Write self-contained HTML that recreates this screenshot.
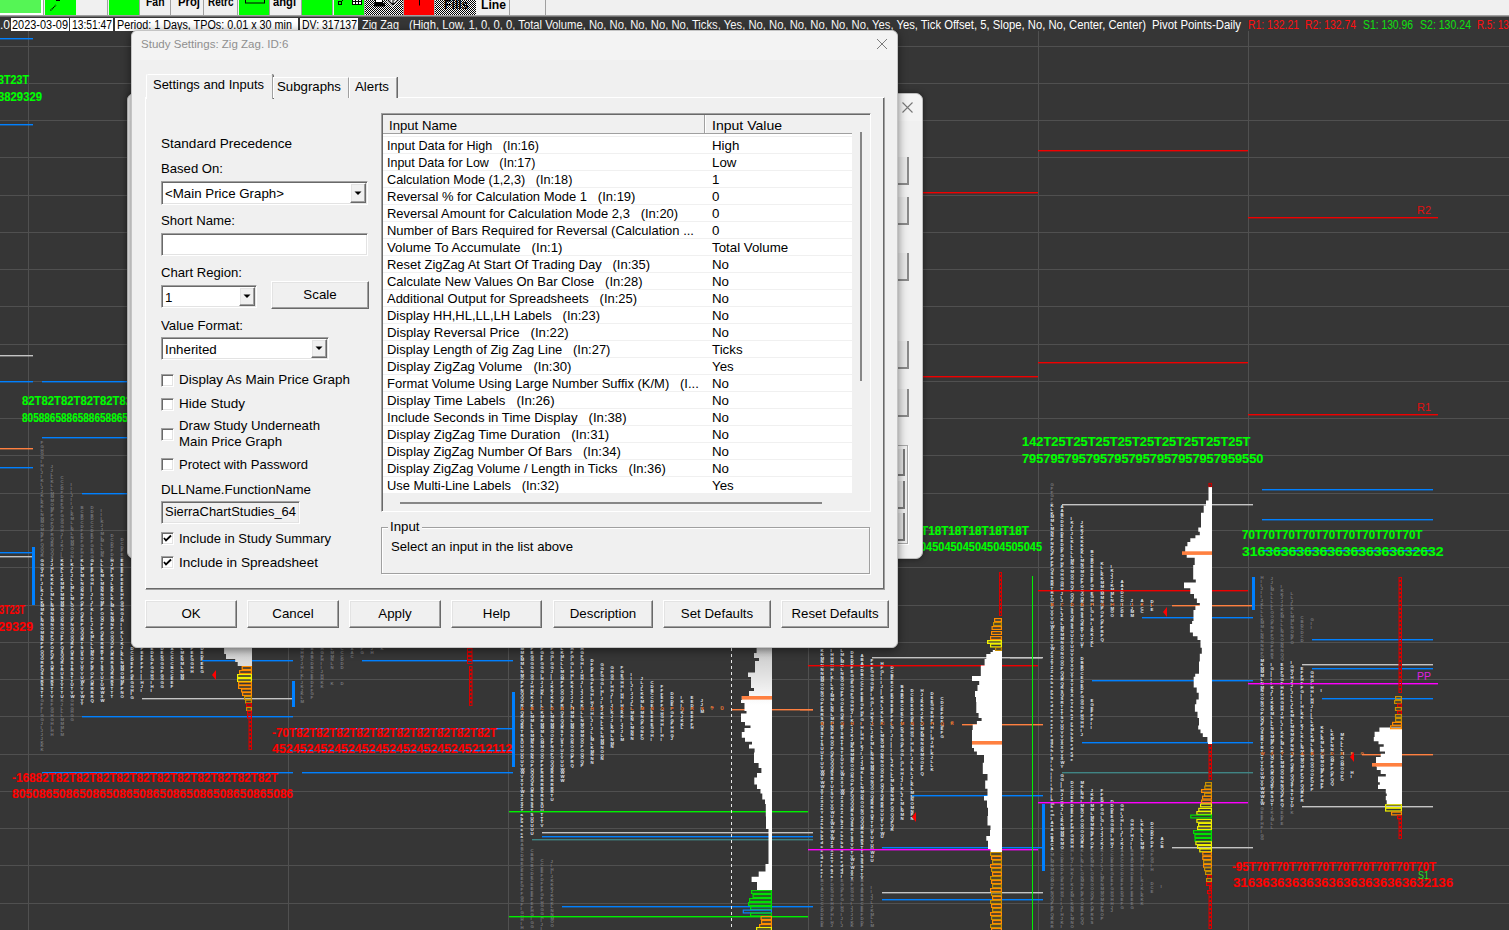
<!DOCTYPE html>
<html><head><meta charset="utf-8"><title>Study Settings</title>
<style>
html,body{margin:0;padding:0}
body{width:1509px;height:930px;overflow:hidden;position:relative;background:#363636;font-family:'Liberation Sans', sans-serif}
.t{position:absolute;white-space:pre;line-height:1;}
.tp{position:absolute;white-space:pre;font:bold 4.3px 'Liberation Sans',sans-serif;line-height:3.76px;text-align:left;transform:scaleX(1.0);transform-origin:0 0}
.c{position:absolute;white-space:pre;line-height:1;font-family:'Liberation Sans',sans-serif}
</style></head><body>
<svg width="1509" height="930" style="position:absolute;left:0;top:0">
<defs><linearGradient id="g2" x1="0" y1="0" x2="0" y2="1"><stop offset="0" stop-color="#c4c4c4"/><stop offset="1" stop-color="#ffffff"/></linearGradient></defs>
<rect x="0" y="46" width="1509" height="1" fill="#505050"/>
<rect x="0" y="83" width="1509" height="1" fill="#505050"/>
<rect x="0" y="120" width="1509" height="1" fill="#505050"/>
<rect x="0" y="157" width="1509" height="1" fill="#505050"/>
<rect x="0" y="195" width="1509" height="1" fill="#505050"/>
<rect x="0" y="232" width="1509" height="1" fill="#505050"/>
<rect x="0" y="269" width="1509" height="1" fill="#505050"/>
<rect x="0" y="306" width="1509" height="1" fill="#505050"/>
<rect x="0" y="344" width="1509" height="1" fill="#505050"/>
<rect x="0" y="381" width="1509" height="1" fill="#505050"/>
<rect x="0" y="418" width="1509" height="1" fill="#505050"/>
<rect x="0" y="455" width="1509" height="1" fill="#505050"/>
<rect x="0" y="493" width="1509" height="1" fill="#505050"/>
<rect x="0" y="530" width="1509" height="1" fill="#505050"/>
<rect x="0" y="567" width="1509" height="1" fill="#505050"/>
<rect x="0" y="605" width="1509" height="1" fill="#505050"/>
<rect x="0" y="642" width="1509" height="1" fill="#505050"/>
<rect x="0" y="679" width="1509" height="1" fill="#505050"/>
<rect x="0" y="716" width="1509" height="1" fill="#505050"/>
<rect x="0" y="754" width="1509" height="1" fill="#505050"/>
<rect x="0" y="791" width="1509" height="1" fill="#505050"/>
<rect x="0" y="828" width="1509" height="1" fill="#505050"/>
<rect x="0" y="865" width="1509" height="1" fill="#505050"/>
<rect x="0" y="903" width="1509" height="1" fill="#505050"/>
<rect x="28" y="31" width="1" height="899" fill="#505050"/>
<rect x="288" y="31" width="1" height="899" fill="#505050"/>
<rect x="508" y="31" width="1" height="899" fill="#505050"/>
<rect x="808" y="31" width="1" height="899" fill="#505050"/>
<rect x="1038" y="31" width="1" height="899" fill="#505050"/>
<rect x="1248" y="31" width="1" height="899" fill="#505050"/>
</svg>
<div class="tp" style="left:40.5px;top:441.2px;color:#76797c">F
G
H
G
G
I
H
I
J
I
K
I
J
J
K
L
K
K
L
N
M
M
O
M
N
P
P
Q
O
Q
R</div>
<div class="tp" style="left:40.5px;top:559.2px;color:#e6edf2">G
G
G
J
H
I
J
I
K
J
L
K
M
M
K
L
N
N
O
M
N
N
P
P
O
Q
O
R
P
Q
S
S
R
S
S
T
T</div>
<div class="tp" style="left:40.5px;top:699.2px;color:#76797c">G
F
F
I
G
G
J
I
J
J
J
K
K
K</div>
<div class="tp" style="left:50.5px;top:465.2px;color:#76797c">J
J
L
L
K
L
L
M
M
M
O
M
P
P
O
P
Q
P
R
Q
R
R
Q
Q
S</div>
<div class="tp" style="left:50.5px;top:559.2px;color:#e6edf2">J
J
H
I
K
K
K
L
L
M
L
L
N
M
N
N
M
N
O
N
P
O
P
O
P
Q
P
S
Q
R
S
S
R
S
T
T
V</div>
<div class="tp" style="left:50.5px;top:699.2px;color:#76797c">E
F
G
G
H
G
H
I
H
H</div>
<div class="tp" style="left:60.5px;top:476.2px;color:#76797c">C
C
C
D
F
D
E
F
G
F
G
G
G
G
H
J
I
J
K
J
I
L</div>
<div class="tp" style="left:60.5px;top:559.2px;color:#e6edf2">K
K
K
L
J
K
M
M
L
M
M
M
M
N
O
O
N
N
O
O
P
P
P
Q
S
Q
Q
R
T
R
U
S
T
V
T
T
U</div>
<div class="tp" style="left:60.5px;top:699.2px;color:#76797c">K
J
L
L
L
M
M
M
L
M</div>
<div class="tp" style="left:70.5px;top:483.2px;color:#76797c">I
I
I
J
I
I
J
L
K
M
L
L
N
L
N
M
M
O
O
N</div>
<div class="tp" style="left:70.5px;top:559.2px;color:#e6edf2">I
K
J
L
J
L
L
M
L
L
M
L
O
O
O
O
P
N
Q
O
O
Q
R
P
Q
S
R
S
T
R
S
T
T
U
T
V
W</div>
<div class="tp" style="left:70.5px;top:699.2px;color:#76797c">G
H
G
H
G
G</div>
<div class="tp" style="left:80.5px;top:506.2px;color:#76797c">B
C
B
D
C
D
F
F
D
F
G
F
H
F</div>
<div class="tp" style="left:80.5px;top:559.2px;color:#e6edf2">K
L
M
L
M
L
N
O
N
N
P
O
P
P
Q
P
R
P
Q
Q
Q
R
T
S
U
S
U
V
U
V
V
U
W
X
V
V
W
Y
Y</div>
<div class="tp" style="left:90.5px;top:506.2px;color:#76797c">D
D
B
D
C
C
D
E
D
F
G
E
H
G</div>
<div class="tp" style="left:90.5px;top:559.2px;color:#e6edf2">G
F
E
F
H
G
H
I
I
J
I
J
I
K
I
L
L
J
L
K
M
L
L
L
M
N
O
P
N
P
O
P
Q
R
R
R
R
Q</div>
<div class="tp" style="left:100.5px;top:509.2px;color:#76797c">I
I
I
K
J
J
M
L
M
L
L
M
N</div>
<div class="tp" style="left:100.5px;top:559.2px;color:#e6edf2">L
L
L
K
M
L
M
N
N
N
O
M
P
P
O
Q
O
P
P
Q
P
R
R
R
R
T
R
T
S
S
V
U
T
U
W
W
X
W</div>
<div class="tp" style="left:110.5px;top:534.2px;color:#76797c">D
C
D
D
F
D
F</div>
<div class="tp" style="left:110.5px;top:559.2px;color:#e6edf2">H
J
H
I
K
J
L
K
K
L
K
L
M
L
N
N
M
N
P
O
O
Q
O
P
Q
R
R
R
S
Q
R
R
R
S
T
T
T</div>
<div class="tp" style="left:120.5px;top:538.2px;color:#76797c">D
C
D
F
E
E</div>
<div class="tp" style="left:120.5px;top:559.2px;color:#e6edf2">E
E
E
E
F
E
E
F
E
H
F
G
G
H
G
J
H
I
I
K
I
J
K
J
L
K
L
N
M
M
O
M
M
P
P
N
O</div>
<div class="tp" style="left:130.5px;top:647.2px;color:#e6edf2">D
C
C
D
E
F
F
G
E
G
G
H
I
G</div>
<div class="tp" style="left:140.5px;top:647.2px;color:#e6edf2">F
E
F
F
F
F
I
I
I
H
J
I</div>
<div class="tp" style="left:150.5px;top:647.2px;color:#e6edf2">E
D
F
G
F
G
G
H
G
I
H
I</div>
<div class="tp" style="left:160.5px;top:647.2px;color:#e6edf2">D
E
D
G
G
G
F
G
G
G
G</div>
<div class="tp" style="left:170.5px;top:647.2px;color:#e6edf2">A
C
C
C
C
B
C
C
E
E
F</div>
<div class="tp" style="left:180.5px;top:647.2px;color:#e6edf2">L
M
K
N
M
L
N
M
M</div>
<div class="tp" style="left:190.5px;top:647.2px;color:#e6edf2">F
E
F
G
G
H
H</div>
<div class="tp" style="left:200.5px;top:647.2px;color:#e6edf2">D
E
D
F
E
E
G</div>
<div class="tp" style="left:300.5px;top:647.2px;color:#76797c">G
H
H
J
J
H
I
K
I
J
K
J
K
L
M</div>
<div class="tp" style="left:310.5px;top:647.2px;color:#76797c">B
A
B
C
D
B
C
E
E
D
F
F
G
F</div>
<div class="tp" style="left:320.5px;top:647.2px;color:#76797c">H
G
F
H
I
I
J
H
H
K
K</div>
<div class="tp" style="left:330.5px;top:647.2px;color:#76797c">L
M
M
N
L
N</div>
<div class="tp" style="left:330.5px;top:682.2px;color:#76797c">K</div>
<div class="tp" style="left:340.5px;top:647.2px;color:#76797c">C
C
C
D
D
D</div>
<div class="tp" style="left:340.5px;top:682.2px;color:#76797c">D</div>
<div class="tp" style="left:350.5px;top:647.2px;color:#76797c">A
A
C</div>
<div class="tp" style="left:360.5px;top:647.2px;color:#76797c">F
G</div>
<div class="tp" style="left:370.5px;top:647.2px;color:#76797c">J
H</div>
<div class="tp" style="left:380.5px;top:647.2px;color:#76797c">K</div>
<div class="tp" style="left:520.5px;top:647.2px;color:#e6edf2">M
M
K
M
M
L
N
M
O
P
P
N
Q
Q
O
R
R
Q
R
Q
R
R
T
R
S
U
U
U
U
U
U
V
W
W
V
X
Y
Y
W
X
Z
X
Z
Z
a
b
b
a
c
c
a</div>
<div class="tp" style="left:520.5px;top:839.2px;color:#76797c">B
A
B
C
D
B
E
C
E
E
E
F
G
F
F
G
G
F
I
G
H
H
I
H</div>
<div class="tp" style="left:530.5px;top:647.2px;color:#e6edf2">F
E
G
G
G
G
G
G
G
J
H
H
K
K
J
K
J
L
M
M
L
L
N
M
M
N
N
O
N
N
O
P
Q
Q
Q
Q
S
Q
R
S
S
S
S
T
S
U
U
U
U
U</div>
<div class="tp" style="left:530.5px;top:849.2px;color:#76797c">C
B
B
C
B
C
D
E
C
E
E
E
E
F
E
F
H
G
I
G
G</div>
<div class="tp" style="left:540.5px;top:647.2px;color:#e6edf2">F
G
F
F
G
G
G
I
H
J
J
H
K
I
I
L
K
K
M
K
M
M
M
L
O
M
M
O
O
O
P
P
P
R
R
R
R
R
S
R
S
S
U
U
T
T
T
V</div>
<div class="tp" style="left:540.5px;top:859.2px;color:#76797c">C
C
E
E
F
D
F
F
F
G
F
H
G
G
G
H
I
J
I</div>
<div class="tp" style="left:550.5px;top:647.2px;color:#e6edf2">F
G
G
I
G
G
J
I
I
J
K
K
J
K
K
L
K
L
M
N
M
M
O
O
P
P
N
O
P
O
Q
Q
R
R
R
R
R
R
R
T
U</div>
<div class="tp" style="left:550.5px;top:860.2px;color:#76797c">J
I
H
I
J
K
K
K
J
K
K
K
L
N
N
M
O
O</div>
<div class="tp" style="left:560.5px;top:647.2px;color:#e6edf2">L
K
M
L
L
L
M
O
M
P
P
O
O
Q
P
R
R
Q
S
Q
Q
R
S
T
U
S
T
U
T
V
U
U
W
W
W
W</div>
<div class="tp" style="left:570.5px;top:647.2px;color:#e6edf2">H
F
G
I
G
I
H
H
I
K
K
J
J
J
J
L
M
M
M
L
M
M
O
N
O
N
O
O
Q
P
R
Q</div>
<div class="tp" style="left:580.5px;top:647.2px;color:#e6edf2">H
G
F
G
H
I
J
H
H
J
I
J
J
J
K
K
L
L
L
N
M
O
M
M
O
O
P
O
Q
O
Q
P</div>
<div class="tp" style="left:590.5px;top:659.2px;color:#e6edf2">D
F
D
F
E
G
F
F
G
H
I
H
J
H
H
I
J
I
J
L
L
M
L
K
M
N
N
N</div>
<div class="tp" style="left:600.5px;top:663.2px;color:#e6edf2">G
G
F
G
G
G
I
H
I
J
I
K
J
K
K
L
L
K
L
N
M
M
N
O
O
N</div>
<div class="tp" style="left:610.5px;top:666.2px;color:#e6edf2">G
H
G
G
I
H
H
J
I
I
J
I
K
J
J
L
K
M
L
N
M
N</div>
<div class="tp" style="left:620.5px;top:666.2px;color:#e6edf2">F
G
E
G
H
H
I
H
H
I
H
J
K
K
I
J
J
J
L
M</div>
<div class="tp" style="left:630.5px;top:673.2px;color:#e6edf2">I
I
I
J
I
J
J
J
L
L
M
K
N
L
M
N
N
N</div>
<div class="tp" style="left:640.5px;top:677.2px;color:#e6edf2">J
L
J
L
K
K
M
L
N
M
N
O
P
O
N
P
O</div>
<div class="tp" style="left:650.5px;top:681.2px;color:#e6edf2">C
D
B
C
C
D
E
F
E
E
E
E
G
G
H
I</div>
<div class="tp" style="left:660.5px;top:685.2px;color:#e6edf2">F
F
F
E
F
F
G
H
G
H
H
I
I
H
I</div>
<div class="tp" style="left:670.5px;top:692.2px;color:#e6edf2">D
D
D
E
F
G
F
G
F
H
H
G
J</div>
<div class="tp" style="left:680.5px;top:696.2px;color:#e6edf2">I
K
I
L
K
J
K
K
L</div>
<div class="tp" style="left:690.5px;top:696.2px;color:#e6edf2">E
E
D
F
E
E
F
F
H</div>
<div class="tp" style="left:700.5px;top:699.2px;color:#e6edf2">J
J
K
M</div>
<div class="tp" style="left:710.5px;top:706.2px;color:#f08040">D</div>
<div class="tp" style="left:720.5px;top:706.2px;color:#f08040">K</div>
<div class="tp" style="left:820.5px;top:649.2px;color:#e6edf2">K
K
M
N
N
N
N
M
M
O
O
N
O
O
P
P
R
R
S
Q
Q
S
S
T
T
S
U
U
T
T
U
V
W
W
V
W
W
X
Y
Z
X
Z
a
Y
a
Z
a
b
b
b
b
d
c
c
c
d
e
f
e
e
f</div>
<div class="tp" style="left:820.5px;top:879.2px;color:#76797c">B
C
A
C
D
C
C
C
D
D
E
D
E</div>
<div class="tp" style="left:830.5px;top:649.2px;color:#e6edf2">I
H
H
H
H
H
I
K
I
L
K
J
M
M
L
N
N
L
M
N
N
N
P
N
O
O
P
Q
P
Q
Q
Q
R
S
R
T
U
T
S
V
V
V
U
W
U
X
W
X
W
X
W
Z
X
X
Z
a
Y
a
a
Z
a</div>
<div class="tp" style="left:830.5px;top:879.2px;color:#76797c">F
D
D
G
G
E
H
G
F
H
I
H
J</div>
<div class="tp" style="left:840.5px;top:649.2px;color:#e6edf2">L
M
L
M
N
L
N
N
O
O
O
P
P
O
O
P
R
Q
R
Q
R
T
S
R
T
T
S
T
T
U
V
V
U
W
X
X
Y
W
W
Z
X
X
a
Z
a
b
Z
Z
c
b
c
b
b
b
e
e
e
d
d
d
f</div>
<div class="tp" style="left:840.5px;top:879.2px;color:#76797c">E
G
G
F
F
G
I
H
G
I
J
I
J</div>
<div class="tp" style="left:850.5px;top:651.2px;color:#e6edf2">D
E
D
D
F
E
G
G
E
G
G
F
G
G
H
H
J
I
K
J
J
J
K
J
M
K
M
M
M
N
O
O
O
N
O
P
Q
P
Q
Q
Q
Q
R
S
Q
S
S
R
T
S
S
V
V
T
V
W
V
W
X
X
Y</div>
<div class="tp" style="left:850.5px;top:879.2px;color:#76797c">H
F
H
G
G
G
I
J
J
J
J
K
K</div>
<div class="tp" style="left:860.5px;top:654.2px;color:#e6edf2">A
B
A
D
D
B
C
C
C
F
E
E
E
G
F
H
F
G
I
H
I
H
H
I
K
J
I
J
J
J
M
K
L
L
L
N
M
O
N
O
O
N
O
Q
Q
Q
R
R
S
R
S
T
T
S
S
S
S
T
T
V</div>
<div class="tp" style="left:860.5px;top:879.2px;color:#76797c">B
A
A
B
B
B
C
E
E
F
D
D
F</div>
<div class="tp" style="left:870.5px;top:659.2px;color:#e6edf2">F
F
F
G
G
G
G
H
F
I
H
G
I
J
H
K
J
K
L
J
K
L
M
L
L
N
N
N
M
M
N
O
N
Q
O
O
Q
R
R
R
S
Q
S
T
T
U
T
U
V
U
U
W
U
U</div>
<div class="tp" style="left:870.5px;top:886.2px;color:#76797c">I
I
J
J
L
J
K
M
L
L
M</div>
<div class="tp" style="left:880.5px;top:662.2px;color:#e6edf2">H
F
G
I
I
I
J
I
I
K
K
I
J
K
L
K
M
L
L
M
N
O
M
O
N
N
N
O
O
O
R
P
Q
Q
S
Q
R
R
R
U
U
U
T
V
T
W
U</div>
<div class="tp" style="left:890.5px;top:666.2px;color:#e6edf2">D
C
B
E
E
C
F
E
D
E
E
E
F
F
F
I
G
I
J
I
I
I
I
I
L
J
K
L
L
L
M
L
M
N
N
M
P
O
O
Q
Q
P
Q
R</div>
<div class="tp" style="left:900.5px;top:685.2px;color:#e6edf2">B
A
B
D
B
C
D
E
C
F
F
D
G
E
G
G
F
G
G
I
G
I
H
H
J
J
I
K
L
J
L
M
L
N
M
N</div>
<div class="tp" style="left:910.5px;top:689.2px;color:#e6edf2">D
C
E
D
E
D
E
G
E
G
H
H
G
I
H
I
H
I
J
K
I
K
L
J
L
K
L
M
M
N
O
M
N
P
N</div>
<div class="tp" style="left:920.5px;top:689.2px;color:#e6edf2">H
J
J
K
K
K
J
K
L
L
M
K
M
N
N
O
N
M
O
O
P
P
Q</div>
<div class="tp" style="left:930.5px;top:692.2px;color:#e6edf2">D
E
E
G
G
E
H
F
G
H
I
I
H
J
H
I
K
J
L
L
K</div>
<div class="tp" style="left:940.5px;top:697.2px;color:#e6edf2">C
D
C
E
F
D
E
G
E
F
G</div>
<div class="tp" style="left:950.5px;top:721.2px;color:#f08040">C</div>
<div class="tp" style="left:1050.5px;top:483.2px;color:#76797c">G
F
F
G
F
F</div>
<div class="tp" style="left:1050.5px;top:504.2px;color:#e6edf2">K
L
K
M
M
L
M
N
N
P
N
P
Q
P
P
P
P
Q
S
S
R
R
T
R
T
U
U
V
V
V
V
U
W
X
X
X
Y
Y
W
Z
X
Z
Y
Z
Z
a
a
b
c
a
b
b
c
d
e
e
c
e
e
e
f
e
g
g
h
h
i
g
i
i
h
i
j
i
i
k
l
j
k
m
k
n
m
l
A
n
A
n
B
A
C
A</div>
<div class="tp" style="left:1050.5px;top:849.2px;color:#76797c">L
M
L
M
N
M
M
O
M
O
P
N
Q
Q
P
R
P
Q
R
R
R</div>
<div class="tp" style="left:1060.5px;top:505.2px;color:#e6edf2">A
A
B
C
D
D
E
D
E
E
D
D
F
G
F
H
F
G
H
G
G
H
H
J
I
J
K
L
L
J
K
L
M
N
M
M
N
O
O
N
O
O
O
P
Q
Q
R
Q
R
S
Q
S
R
T
T
T
S
V
U
U
V
V
V
X
X
V
Y
X
W
Y</div>
<div class="tp" style="left:1060.5px;top:774.2px;color:#e6edf2">G
G
I
I
H
J
J
K
K
J
L
J
K
K
M
M
M
N
M
O</div>
<div class="tp" style="left:1060.5px;top:849.2px;color:#76797c">C
C
D
E
D
D
F
G
E
H
H
H
G
I
I
J
I
H
J
K
I</div>
<div class="tp" style="left:1070.5px;top:517.2px;color:#e6edf2">I
K
J
L
J
L
K
L
L
L
L
M
N
O
M
O
O
N
Q
P
O
Q
P
R
S
S
Q
R
S
S
U
U
T
V
U
U
V
V
V
X
V
V
Y
X
Y
Z
X
X
a
Y
a
b
a
Z
c
b
b
b
b
b
e
d
e
d
e</div>
<div class="tp" style="left:1070.5px;top:781.2px;color:#e6edf2">D
C
C
D
E
E
D
E
E
F
F
F
H
F
G
H
H
H</div>
<div class="tp" style="left:1070.5px;top:849.2px;color:#76797c">H
I
H
J
I
H
K
J
I
K
J
K
M
L
K
N
N
L
M
N
O</div>
<div class="tp" style="left:1080.5px;top:521.2px;color:#e6edf2">J
K
K
J
K
K
K
K
K
L
M
N
O
M
O
P
P
O
Q
O
Q
R
R
R
S
S
Q
R
R
T
U
T
U
T</div>
<div class="tp" style="left:1080.5px;top:657.2px;color:#e6edf2">D
B
B
D
C
E
D
E
D
F
G
G
G
G
F
H
G
H
H
I
J</div>
<div class="tp" style="left:1080.5px;top:781.2px;color:#e6edf2">M
K
L
N
N
L
M
N
O
P
O
O
O
O
Q
Q
R
R</div>
<div class="tp" style="left:1080.5px;top:849.2px;color:#76797c">K
L
L
N
L
L
O
N
M
N
P
N
P
O
O
R
R
P
Q
Q</div>
<div class="tp" style="left:1090.5px;top:550.2px;color:#e6edf2">B
C
B
D
E
E
D
E
F
G
E
E
G
H
H
I
G
I
H
I
J
K
K
J
K
L</div>
<div class="tp" style="left:1090.5px;top:699.2px;color:#e6edf2">E
G
E
F
F
F
I
I</div>
<div class="tp" style="left:1090.5px;top:789.2px;color:#e6edf2">J
K
K
L
M
M
L
M
N
M
N
N
P
P
O
P</div>
<div class="tp" style="left:1090.5px;top:849.2px;color:#76797c">K
K
K
M
N
L
O
N
N
O
O
O
Q
P
P
Q
P
R
S
S</div>
<div class="tp" style="left:1100.5px;top:562.2px;color:#e6edf2">K
L
L
K
K
M
M
N
M
M
N
N
P
O
P
O
P
P
R
P
Q</div>
<div class="tp" style="left:1100.5px;top:789.2px;color:#e6edf2">F
F
E
H
F
G
G
I
G
I
J
J
J
J
K
J</div>
<div class="tp" style="left:1100.5px;top:849.2px;color:#76797c">K
J
J
J
L
J
L
M
K
N
M
M
O
M
N
P
N
O
P</div>
<div class="tp" style="left:1110.5px;top:565.2px;color:#e6edf2">I
K
J
J
J
K
M
M
L
N
M
M
O
O</div>
<div class="tp" style="left:1110.5px;top:800.2px;color:#e6edf2">D
D
D
E
E
G
G
G
H
I
H
H
J</div>
<div class="tp" style="left:1110.5px;top:849.2px;color:#76797c">C
C
D
E
D
E
G
F
E
F
G
H
G
H
H
J
J</div>
<div class="tp" style="left:1120.5px;top:580.2px;color:#e6edf2">A
A
A
D
C
D
E
C
D
E</div>
<div class="tp" style="left:1120.5px;top:804.2px;color:#e6edf2">G
H
I
J
H
I
I
J
I
J
K
J</div>
<div class="tp" style="left:1120.5px;top:849.2px;color:#76797c">A
A
C
C
D
C
D
C
E
F
E
D
G
E
F
G</div>
<div class="tp" style="left:1130.5px;top:599.2px;color:#e6edf2">J
L
J
M
M</div>
<div class="tp" style="left:1130.5px;top:819.2px;color:#e6edf2">G
H
G
I
H
J
I
I</div>
<div class="tp" style="left:1130.5px;top:849.2px;color:#76797c">B
B
A
D
B
B
D
E
E
F
F
E
E
E
E
G</div>
<div class="tp" style="left:1140.5px;top:599.2px;color:#e6edf2">A
C
C
C</div>
<div class="tp" style="left:1140.5px;top:819.2px;color:#e6edf2">L
K
L
K
L
L
M
M</div>
<div class="tp" style="left:1140.5px;top:849.2px;color:#76797c">G
H
H
I
H
I
I
I
K
J
K
L
K
K
K</div>
<div class="tp" style="left:1150.5px;top:600.2px;color:#e6edf2">D
F
E</div>
<div class="tp" style="left:1150.5px;top:822.2px;color:#e6edf2">D
C
D
D
F
D
F</div>
<div class="tp" style="left:1150.5px;top:849.2px;color:#76797c">G
F
G
G
I
H</div>
<div class="tp" style="left:1150.5px;top:882.2px;color:#76797c">D
C
E</div>
<div class="tp" style="left:1160.5px;top:837.2px;color:#e6edf2">A
C
B</div>
<div class="tp" style="left:1160.5px;top:885.2px;color:#76797c">I</div>
<div class="tp" style="left:1260.5px;top:576.2px;color:#76797c">H
I
I
J
I
I
J
K
L
L
L
K
M
M
L
N
N
N
N
N
P
O</div>
<div class="tp" style="left:1260.5px;top:659.2px;color:#e6edf2">M
K
M
M
M
L
N
M
N
O
O
N
O
O
P
Q
Q
P
Q
S
R
R
T
R
T
U
T
V
T
U
U
W
V
V
W
W
W
X
W</div>
<div class="tp" style="left:1260.5px;top:807.2px;color:#76797c">G
E
E
F
H
F
I
G
G</div>
<div class="tp" style="left:1270.5px;top:577.2px;color:#76797c">J
J
L
M
L
L
L
L
L
O
O
O
P
N
P
P
O
O
P
R
R
S</div>
<div class="tp" style="left:1270.5px;top:663.2px;color:#e6edf2">I
G
I
I
I
I
K
J
I
J
K
K
K
M
L
L
L
N
N
M
M
P
O
P
Q
O
P
R
Q
R
Q
Q
R
T
R
S
U
T</div>
<div class="tp" style="left:1270.5px;top:807.2px;color:#76797c">J
K
J
M
L
L</div>
<div class="tp" style="left:1280.5px;top:585.2px;color:#76797c">I
K
K
J
J
J
K
K
M
L
L
L
N
N
O
N
N
N
Q
Q</div>
<div class="tp" style="left:1280.5px;top:663.2px;color:#e6edf2">E
D
F
G
G
F
H
F
H
H
G
H
H
J
H
I
J
I
K
K
L
M
L
K
L
L
M
M
O
O
N
N
N
Q
Q
P
R
Q</div>
<div class="tp" style="left:1280.5px;top:807.2px;color:#76797c">C
E
D
F
E</div>
<div class="tp" style="left:1290.5px;top:592.2px;color:#76797c">L
L
J
L
K
L
M
M
L
N
O
N
P
O</div>
<div class="tp" style="left:1290.5px;top:661.2px;color:#e6edf2">I
G
H
J
H
J
J
I
J
L
L
J
L
K
M
L
L
M
N
M
O
P
N
N
O
P
P
Q
R
P
Q
Q
S
T
S
T
U
T
U</div>
<div class="tp" style="left:1290.5px;top:807.2px;color:#76797c">I
K</div>
<div class="tp" style="left:1300.5px;top:616.2px;color:#76797c">C
B
D
C
D
C
D</div>
<div class="tp" style="left:1300.5px;top:667.2px;color:#e6edf2">E
F
F
H
F
F
G
I
I
I
H
I
K
K
I
K
J
L
K
L
L
N
M
M
M
O
M
P
P
O
P
Q
Q
R
P
R</div>
<div class="tp" style="left:1310.5px;top:618.2px;color:#76797c">G
I
I</div>
<div class="tp" style="left:1310.5px;top:671.2px;color:#e6edf2">G
H
G
I
H
H
I
H
H
J
I
I
L
L
K
M
L
K
M
L
L
N
O
N
O
O
O
O
P
O
P
P</div>
<div class="tp" style="left:1320.5px;top:689.2px;color:#e6edf2">I</div>
<div class="tp" style="left:1320.5px;top:726.2px;color:#e6edf2">K
K
L
K
M
L
M
M
N
M
O
M
P
P
N
P
P</div>
<div class="tp" style="left:1330.5px;top:729.2px;color:#e6edf2">L
K
M
L
N
N
N
O
M
P
P
O
P
Q
Q</div>
<div class="tp" style="left:1340.5px;top:733.2px;color:#e6edf2">M
K
L
L
L
M
O
O
M
O
O
P
O</div>
<div class="tp" style="left:1350.5px;top:771.2px;color:#e6edf2">H
I</div>
<div class="tp" style="left:520.5px;top:706.7px;color:#ff8030;background:#363636">A</div>
<div class="tp" style="left:530.5px;top:706.7px;color:#ff8030;background:#363636">B</div>
<div class="tp" style="left:540.5px;top:706.7px;color:#ff8030;background:#363636">C</div>
<div class="tp" style="left:550.5px;top:706.7px;color:#ff8030;background:#363636">D</div>
<div class="tp" style="left:560.5px;top:706.7px;color:#ff8030;background:#363636">E</div>
<div class="tp" style="left:570.5px;top:706.7px;color:#ff8030;background:#363636">F</div>
<div class="tp" style="left:580.5px;top:706.7px;color:#ff8030;background:#363636">G</div>
<div class="tp" style="left:590.5px;top:706.7px;color:#ff8030;background:#363636">H</div>
<div class="tp" style="left:600.5px;top:706.7px;color:#ff8030;background:#363636">I</div>
<div class="tp" style="left:610.5px;top:706.7px;color:#ff8030;background:#363636">J</div>
<div class="tp" style="left:620.5px;top:706.7px;color:#ff8030;background:#363636">K</div>
<div class="tp" style="left:630.5px;top:706.7px;color:#ff8030;background:#363636">L</div>
<div class="tp" style="left:640.5px;top:706.7px;color:#ff8030;background:#363636">M</div>
<div class="tp" style="left:650.5px;top:706.7px;color:#ff8030;background:#363636">N</div>
<div class="tp" style="left:660.5px;top:706.7px;color:#ff8030;background:#363636">O</div>
<div class="tp" style="left:670.5px;top:706.7px;color:#ff8030;background:#363636">P</div>
<div class="tp" style="left:680.5px;top:706.7px;color:#ff8030;background:#363636">Q</div>
<div class="tp" style="left:690.5px;top:706.7px;color:#ff8030;background:#363636">R</div>
<div class="tp" style="left:700.5px;top:706.7px;color:#ff8030;background:#363636">S</div>
<div class="tp" style="left:710.5px;top:706.7px;color:#ff8030;background:#363636">T</div>
<div class="tp" style="left:720.5px;top:706.7px;color:#ff8030;background:#363636">U</div>
<div class="tp" style="left:820.5px;top:721.7px;color:#ff8030;background:#363636">E</div>
<div class="tp" style="left:830.5px;top:721.7px;color:#ff8030;background:#363636">F</div>
<div class="tp" style="left:840.5px;top:721.7px;color:#ff8030;background:#363636">G</div>
<div class="tp" style="left:850.5px;top:721.7px;color:#ff8030;background:#363636">H</div>
<div class="tp" style="left:860.5px;top:721.7px;color:#ff8030;background:#363636">I</div>
<div class="tp" style="left:870.5px;top:721.7px;color:#ff8030;background:#363636">J</div>
<div class="tp" style="left:880.5px;top:721.7px;color:#ff8030;background:#363636">K</div>
<div class="tp" style="left:890.5px;top:721.7px;color:#ff8030;background:#363636">L</div>
<div class="tp" style="left:900.5px;top:721.7px;color:#ff8030;background:#363636">M</div>
<div class="tp" style="left:910.5px;top:721.7px;color:#ff8030;background:#363636">N</div>
<div class="tp" style="left:920.5px;top:721.7px;color:#ff8030;background:#363636">O</div>
<div class="tp" style="left:930.5px;top:721.7px;color:#ff8030;background:#363636">P</div>
<div class="tp" style="left:940.5px;top:721.7px;color:#ff8030;background:#363636">Q</div>
<div class="tp" style="left:950.5px;top:721.7px;color:#ff8030;background:#363636">R</div>
<div class="tp" style="left:1050.5px;top:602.7px;color:#ff8030;background:#363636">B</div>
<div class="tp" style="left:1060.5px;top:602.7px;color:#ff8030;background:#363636">C</div>
<div class="tp" style="left:1070.5px;top:602.7px;color:#ff8030;background:#363636">D</div>
<div class="tp" style="left:1080.5px;top:602.7px;color:#ff8030;background:#363636">E</div>
<div class="tp" style="left:1090.5px;top:602.7px;color:#ff8030;background:#363636">F</div>
<div class="tp" style="left:1100.5px;top:602.7px;color:#ff8030;background:#363636">G</div>
<div class="tp" style="left:1110.5px;top:602.7px;color:#ff8030;background:#363636">H</div>
<div class="tp" style="left:1120.5px;top:602.7px;color:#ff8030;background:#363636">I</div>
<div class="tp" style="left:1130.5px;top:602.7px;color:#ff8030;background:#363636">J</div>
<div class="tp" style="left:1140.5px;top:602.7px;color:#ff8030;background:#363636">K</div>
<div class="tp" style="left:1150.5px;top:602.7px;color:#ff8030;background:#363636">L</div>
<div class="tp" style="left:1260.5px;top:751.7px;color:#ff8030;background:#363636">W</div>
<div class="tp" style="left:1270.5px;top:751.7px;color:#ff8030;background:#363636">X</div>
<div class="tp" style="left:1280.5px;top:751.7px;color:#ff8030;background:#363636">Y</div>
<div class="tp" style="left:1290.5px;top:751.7px;color:#ff8030;background:#363636">Z</div>
<div class="tp" style="left:1300.5px;top:751.7px;color:#ff8030;background:#363636">A</div>
<div class="tp" style="left:1310.5px;top:751.7px;color:#ff8030;background:#363636">B</div>
<div class="tp" style="left:1320.5px;top:751.7px;color:#ff8030;background:#363636">C</div>
<div class="tp" style="left:1330.5px;top:751.7px;color:#ff8030;background:#363636">D</div>
<div class="tp" style="left:1340.5px;top:751.7px;color:#ff8030;background:#363636">E</div>
<div class="tp" style="left:1350.5px;top:751.7px;color:#ff8030;background:#363636">F</div>
<div class="tp" style="left:1360.5px;top:751.7px;color:#ff8030;background:#363636">G</div>
<svg width="1509" height="930" style="position:absolute;left:0;top:0">
<rect x="0" y="38" width="33" height="1.4" fill="#0080ff"/>
<rect x="0" y="124" width="33" height="1.4" fill="#0080ff"/>
<rect x="0" y="355" width="33" height="1.4" fill="#c4c4c4"/>
<rect x="0" y="381" width="33" height="1.4" fill="#0080ff"/>
<rect x="0" y="448" width="33" height="1.4" fill="#ff8040"/>
<rect x="0" y="467" width="33" height="1.4" fill="#0080ff"/>
<rect x="0" y="552" width="33" height="1.4" fill="#0080ff"/>
<rect x="0" y="556" width="33" height="1.4" fill="#c4c4c4"/>
<rect x="42" y="381" width="85" height="1.4" fill="#0080ff"/>
<rect x="42" y="437" width="85" height="1.4" fill="#0080ff"/>
<rect x="82" y="493" width="45" height="1.4" fill="#0080ff"/>
<rect x="202" y="660" width="91" height="1.4" fill="#0080ff"/>
<rect x="362" y="660" width="151" height="1.4" fill="#0080ff"/>
<rect x="142" y="698" width="151" height="1.4" fill="#c4c4c4"/>
<rect x="82" y="716" width="211" height="1.4" fill="#0080ff"/>
<rect x="42" y="772" width="251" height="1.4" fill="#0080ff"/>
<rect x="302" y="772" width="211" height="1.4" fill="#0080ff"/>
<rect x="290" y="728" width="222" height="1.4" fill="#0080ff"/>
<rect x="290" y="750" width="222" height="1.4" fill="#0080ff"/>
<rect x="509" y="811" width="299" height="1.4" fill="#00f000"/>
<rect x="542" y="832" width="271" height="1.4" fill="#c4c4c4"/>
<rect x="542" y="836" width="271" height="1.4" fill="#0080ff"/>
<rect x="532" y="839" width="281" height="1.4" fill="#408484"/>
<rect x="562" y="906" width="251" height="1.4" fill="#0080ff"/>
<rect x="509" y="916" width="299" height="1.4" fill="#00f000"/>
<rect x="731" y="709" width="82" height="1.4" fill="#ff8040"/>
<rect x="808" y="665" width="230" height="1.4" fill="#f00000"/>
<rect x="872" y="657" width="171" height="1.4" fill="#c4c4c4"/>
<rect x="962" y="724" width="81" height="1.4" fill="#ff8040"/>
<rect x="912" y="795" width="131" height="1.4" fill="#0080ff"/>
<rect x="808" y="849" width="230" height="1.4" fill="#ff00ff"/>
<rect x="882" y="847" width="161" height="1.4" fill="#0080ff"/>
<rect x="882" y="892" width="161" height="1.4" fill="#c4c4c4"/>
<rect x="882" y="899" width="161" height="1.4" fill="#0080ff"/>
<rect x="800" y="709" width="13" height="1.4" fill="#ff8040"/>
<rect x="922" y="192" width="116" height="1.4" fill="#f00000"/>
<rect x="922" y="376" width="116" height="1.4" fill="#f00000"/>
<rect x="1038" y="150" width="210" height="1.4" fill="#f00000"/>
<rect x="1038" y="362" width="210" height="1.4" fill="#f00000"/>
<rect x="1062" y="504" width="191" height="1.4" fill="#c4c4c4"/>
<rect x="1038" y="590" width="210" height="1.4" fill="#f00000"/>
<rect x="1172" y="605" width="81" height="1.4" fill="#ff8040"/>
<rect x="1142" y="617" width="111" height="1.4" fill="#0080ff"/>
<rect x="1092" y="680" width="161" height="1.4" fill="#0080ff"/>
<rect x="1082" y="742" width="171" height="1.4" fill="#0080ff"/>
<rect x="1062" y="772" width="191" height="1.4" fill="#408484"/>
<rect x="1038" y="802" width="210" height="1.4" fill="#ff00ff"/>
<rect x="1172" y="847" width="81" height="1.4" fill="#c4c4c4"/>
<rect x="1010" y="657" width="32" height="1.4" fill="#c4c4c4"/>
<rect x="1248" y="217" width="190" height="1.4" fill="#f00000"/>
<rect x="1248" y="414" width="190" height="1.4" fill="#f00000"/>
<rect x="1262" y="489" width="171" height="1.4" fill="#0080ff"/>
<rect x="1262" y="519" width="171" height="1.4" fill="#0080ff"/>
<rect x="1262" y="550" width="171" height="1.4" fill="#0080ff"/>
<rect x="1312" y="639" width="121" height="1.4" fill="#0080ff"/>
<rect x="1302" y="664" width="131" height="1.4" fill="#c4c4c4"/>
<rect x="1312" y="668" width="121" height="1.4" fill="#0080ff"/>
<rect x="1248" y="683" width="190" height="1.4" fill="#ff00ff"/>
<rect x="1322" y="698" width="111" height="1.4" fill="#0080ff"/>
<rect x="1362" y="754" width="71" height="1.4" fill="#ff8040"/>
<rect x="1302" y="806" width="131" height="1.4" fill="#c4c4c4"/>
<rect x="32" y="547" width="3" height="58" fill="#0080ff"/>
<rect x="292" y="681" width="3" height="26" fill="#0080ff"/>
<rect x="512" y="692" width="3" height="75" fill="#0080ff"/>
<rect x="1042" y="804" width="3" height="67" fill="#0080ff"/>
<rect x="1252" y="577" width="3" height="33" fill="#0080ff"/>
<rect x="1032" y="576" width="1" height="354" fill="#00f000"/>
<line x1="731.5" y1="648" x2="731.5" y2="930" stroke="#e8e8e8" stroke-width="1" stroke-dasharray="3,3"/>
<defs><linearGradient id="gp2" gradientUnits="userSpaceOnUse" x1="0" y1="647" x2="0" y2="705"><stop offset="0" stop-color="#c6c6c6"/><stop offset="1" stop-color="#ffffff"/></linearGradient><linearGradient id="gp1" gradientUnits="userSpaceOnUse" x1="0" y1="640" x2="0" y2="666"><stop offset="0" stop-color="#c8c8c8"/><stop offset="1" stop-color="#dcdcdc"/></linearGradient></defs>
<polygon points="772.0,647.0 756.6,647.0 756.6,653.0 754.0,653.0 754.0,658.0 759.0,658.0 759.0,661.0 755.0,661.0 755.0,672.5 748.0,672.5 748.0,677.0 751.0,677.0 751.0,688.0 754.0,688.0 754.0,691.0 749.0,691.0 749.0,696.0 741.8,696.0 741.8,700.0 741.0,700.0 741.0,703.0 744.5,703.0 744.5,711.0 746.5,711.0 746.5,713.5 741.0,713.5 741.0,722.0 745.0,722.0 745.0,725.6 750.5,725.6 750.5,728.0 744.5,728.0 744.5,732.0 741.8,732.0 741.8,737.7 745.0,737.7 745.0,741.8 752.0,741.8 752.0,744.5 749.0,744.5 749.0,748.5 754.6,748.5 754.6,752.5 754.0,752.5 754.0,763.0 758.6,763.0 758.6,768.0 761.4,768.0 761.4,773.0 757.0,773.0 757.0,777.4 754.3,777.4 754.3,784.5 757.0,784.5 757.0,789.0 760.5,789.0 760.5,793.4 762.3,793.4 762.3,799.6 765.0,799.6 765.0,804.0 765.8,804.0 765.8,816.5 766.0,816.5 766.0,829.0 768.5,829.0 768.5,864.0 765.5,864.0 765.5,871.5 758.7,871.5 758.7,876.8 751.6,876.8 751.6,882.0 757.0,882.0 757.0,890.0 772.0,890.0" fill="url(#gp2)"/>
<polygon points="1002.0,650.0 992.8,650.0 992.8,652.0 990.5,652.0 990.5,654.0 986.3,654.0 986.3,659.0 984.6,659.0 984.6,665.4 980.8,665.4 980.8,676.0 972.0,676.0 972.0,681.0 979.2,681.0 979.2,685.0 977.5,685.0 977.5,691.0 975.0,691.0 975.0,697.0 976.0,697.0 976.0,702.0 976.3,702.0 976.3,713.0 978.6,713.0 978.6,718.0 981.6,718.0 981.6,721.0 976.9,721.0 976.9,724.6 972.7,724.6 972.7,730.0 972.0,730.0 972.0,748.0 974.0,748.0 974.0,751.5 976.9,751.5 976.9,755.0 984.0,755.0 984.0,762.7 982.8,762.7 982.8,774.0 987.5,774.0 987.5,780.5 985.2,780.5 985.2,788.8 987.5,788.8 987.5,795.9 984.0,795.9 984.0,800.6 987.0,800.6 987.0,807.7 988.0,807.7 988.0,816.0 987.5,816.0 987.5,825.4 990.5,825.4 990.5,830.0 990.0,830.0 990.0,836.0 986.3,836.0 986.3,840.8 988.0,840.8 988.0,849.0 990.5,849.0 990.5,852.0 1002.0,852.0" fill="#fff"/>
<polygon points="1212.0,486.7 1208.5,486.7 1208.5,500.5 1206.0,500.5 1206.0,505.6 1203.7,505.6 1203.7,512.8 1201.0,512.8 1201.0,527.4 1198.3,527.4 1198.3,531.7 1199.8,531.7 1199.8,535.3 1195.4,535.3 1195.4,538.2 1190.3,538.2 1190.3,541.9 1187.4,541.9 1187.4,546.2 1185.2,546.2 1185.2,554.2 1186.7,554.2 1186.7,557.8 1194.7,557.8 1194.7,565.0 1193.2,565.0 1193.2,579.6 1195.8,579.6 1195.8,582.5 1184.0,582.5 1184.0,588.3 1190.3,588.3 1190.3,594.1 1194.0,594.1 1194.0,598.5 1196.9,598.5 1196.9,602.9 1199.8,602.9 1199.8,605.8 1195.4,605.8 1195.4,610.0 1193.5,610.0 1193.5,621.0 1192.1,621.0 1192.1,624.0 1189.9,624.0 1189.9,632.4 1192.9,632.4 1192.9,636.2 1197.5,636.2 1197.5,640.0 1200.5,640.0 1200.5,647.7 1201.8,647.7 1201.8,653.8 1199.8,653.8 1199.8,661.4 1199.0,661.4 1199.0,673.7 1195.2,673.7 1195.2,676.7 1193.7,676.7 1193.7,687.4 1196.7,687.4 1196.7,692.7 1198.7,692.7 1198.7,699.6 1196.3,699.6 1196.3,704.2 1194.9,704.2 1194.9,711.8 1197.5,711.8 1197.5,718.0 1199.0,718.0 1199.0,725.6 1198.2,725.6 1198.2,729.4 1200.5,729.4 1200.5,733.2 1202.8,733.2 1202.8,737.0 1207.4,737.0 1207.4,742.4 1208.0,742.4 1208.0,744.0 1212.0,744.0" fill="#fff"/>
<polygon points="1402.0,727.4 1379.4,727.4 1379.4,731.7 1374.6,731.7 1374.6,737.0 1373.8,737.0 1373.8,741.2 1378.5,741.2 1378.5,744.2 1383.7,744.2 1383.7,746.8 1379.8,746.8 1379.8,751.5 1385.0,751.5 1385.0,753.7 1380.7,753.7 1380.7,757.0 1376.0,757.0 1376.0,766.6 1376.8,766.6 1376.8,770.0 1380.7,770.0 1380.7,774.0 1385.8,774.0 1385.8,776.6 1378.0,776.6 1378.0,782.2 1379.8,782.2 1379.8,784.8 1378.0,784.8 1378.0,789.0 1385.8,789.0 1385.8,793.4 1386.7,793.4 1386.7,796.0 1385.8,796.0 1385.8,800.3 1386.7,800.3 1386.7,804.2 1402.0,804.2" fill="#fff"/>
<polygon points="252.0,647.0 224.1,647.0 224.1,654.0 226.0,654.0 226.0,659.0 235.2,659.0 235.2,662.0 237.7,662.0 237.7,666.0 252.0,666.0" fill="url(#gp1)"/>
<rect x="1209" y="483.5" width="2.5" height="3" fill="none" stroke="#c00000" stroke-width="1.2"/>
<rect x="740" y="647" width="32" height="50" fill="url(#g2)" opacity="0.0"/>
<rect x="741.8" y="696" width="30.200000000000045" height="3.6" fill="#ff8040"/>
<rect x="972" y="741" width="30" height="3.6" fill="#ff8040"/>
<rect x="1182" y="551.3" width="30" height="3.6" fill="#ff8040"/>
<rect x="1372" y="763" width="30" height="3.6" fill="#ff8040"/>
<rect x="242.20" y="666.60" width="9.20" height="2.8" fill="none" stroke="#ff8c00" stroke-width="1.2"/>
<rect x="239.60" y="670.60" width="11.80" height="2.8" fill="none" stroke="#ff8c00" stroke-width="1.2"/>
<rect x="237.60" y="674.60" width="13.80" height="2.8" fill="none" stroke="#f0f000" stroke-width="1.2"/>
<rect x="237.60" y="678.60" width="13.80" height="2.8" fill="none" stroke="#f0f000" stroke-width="1.2"/>
<rect x="238.60" y="682.10" width="12.80" height="2.8" fill="none" stroke="#ff8c00" stroke-width="1.2"/>
<rect x="238.60" y="685.60" width="12.80" height="2.8" fill="none" stroke="#ff8c00" stroke-width="1.2"/>
<rect x="241.60" y="689.10" width="9.80" height="2.8" fill="none" stroke="#ff8c00" stroke-width="1.2"/>
<rect x="242.60" y="692.60" width="8.80" height="2.8" fill="none" stroke="#ff8c00" stroke-width="1.2"/>
<rect x="244.60" y="696.60" width="6.80" height="2.8" fill="none" stroke="#c89000" stroke-width="1.2"/>
<rect x="245.60" y="700.10" width="5.80" height="2.8" fill="none" stroke="#c89000" stroke-width="1.2"/>
<rect x="246.60" y="703.60" width="4.80" height="2.8" fill="none" stroke="#e80000" stroke-width="1.2"/>
<rect x="246.60" y="707.60" width="4.80" height="2.8" fill="none" stroke="#c89000" stroke-width="1.2"/>
<rect x="247.60" y="711.10" width="3.80" height="2.8" fill="none" stroke="#e80000" stroke-width="1.2"/>
<rect x="247.60" y="715.10" width="3.80" height="2.8" fill="none" stroke="#e80000" stroke-width="1.2"/>
<rect x="751.60" y="890.60" width="19.80" height="2.8" fill="none" stroke="#00e000" stroke-width="1.2"/>
<rect x="753.10" y="894.60" width="18.30" height="2.8" fill="none" stroke="#00e000" stroke-width="1.2"/>
<rect x="749.60" y="898.60" width="21.80" height="2.8" fill="none" stroke="#00e000" stroke-width="1.2"/>
<rect x="748.60" y="902.60" width="22.80" height="2.8" fill="none" stroke="#00e000" stroke-width="1.2"/>
<rect x="750.60" y="906.60" width="20.80" height="2.8" fill="none" stroke="#00e000" stroke-width="1.2"/>
<rect x="743.30" y="910.10" width="28.10" height="2.8" fill="none" stroke="#0a84ff" stroke-width="1.2"/>
<rect x="750.60" y="913.10" width="20.80" height="2.8" fill="none" stroke="#00e000" stroke-width="1.2"/>
<rect x="761.10" y="916.60" width="10.30" height="2.8" fill="none" stroke="#ff8c00" stroke-width="1.2"/>
<rect x="761.60" y="920.60" width="9.80" height="2.8" fill="none" stroke="#ff8c00" stroke-width="1.2"/>
<rect x="759.60" y="924.60" width="11.80" height="2.8" fill="none" stroke="#ff8c00" stroke-width="1.2"/>
<rect x="756.60" y="927.60" width="14.80" height="2.8" fill="none" stroke="#f0f000" stroke-width="1.2"/>
<rect x="987.60" y="640.60" width="13.80" height="2.8" fill="none" stroke="#f0f000" stroke-width="1.2"/>
<rect x="990.60" y="644.10" width="10.80" height="2.8" fill="none" stroke="#f0f000" stroke-width="1.2"/>
<rect x="995.60" y="647.60" width="5.80" height="2.8" fill="none" stroke="#c89000" stroke-width="1.2"/>
<rect x="994.60" y="618.60" width="6.80" height="2.8" fill="none" stroke="#ff8c00" stroke-width="1.2"/>
<rect x="993.60" y="622.60" width="7.80" height="2.8" fill="none" stroke="#c89000" stroke-width="1.2"/>
<rect x="992.10" y="626.60" width="9.30" height="2.8" fill="none" stroke="#ff8c00" stroke-width="1.2"/>
<rect x="991.60" y="631.60" width="9.80" height="2.8" fill="none" stroke="#ff8c00" stroke-width="1.2"/>
<rect x="990.60" y="636.60" width="10.80" height="2.8" fill="none" stroke="#ff8c00" stroke-width="1.2"/>
<rect x="987.60" y="640.60" width="13.80" height="2.8" fill="none" stroke="#f0f000" stroke-width="1.2"/>
<rect x="990.60" y="852.60" width="10.80" height="2.8" fill="none" stroke="#c89000" stroke-width="1.2"/>
<rect x="991.60" y="856.60" width="9.80" height="2.8" fill="none" stroke="#ff8c00" stroke-width="1.2"/>
<rect x="992.60" y="860.60" width="8.80" height="2.8" fill="none" stroke="#c89000" stroke-width="1.2"/>
<rect x="990.60" y="864.60" width="10.80" height="2.8" fill="none" stroke="#ff8c00" stroke-width="1.2"/>
<rect x="991.60" y="868.60" width="9.80" height="2.8" fill="none" stroke="#c89000" stroke-width="1.2"/>
<rect x="992.60" y="872.60" width="8.80" height="2.8" fill="none" stroke="#ff8c00" stroke-width="1.2"/>
<rect x="990.60" y="876.60" width="10.80" height="2.8" fill="none" stroke="#c89000" stroke-width="1.2"/>
<rect x="991.60" y="880.60" width="9.80" height="2.8" fill="none" stroke="#ff8c00" stroke-width="1.2"/>
<rect x="992.60" y="884.60" width="8.80" height="2.8" fill="none" stroke="#c89000" stroke-width="1.2"/>
<rect x="990.60" y="888.60" width="10.80" height="2.8" fill="none" stroke="#ff8c00" stroke-width="1.2"/>
<rect x="991.60" y="892.60" width="9.80" height="2.8" fill="none" stroke="#c89000" stroke-width="1.2"/>
<rect x="992.60" y="896.60" width="8.80" height="2.8" fill="none" stroke="#ff8c00" stroke-width="1.2"/>
<rect x="990.60" y="900.60" width="10.80" height="2.8" fill="none" stroke="#c89000" stroke-width="1.2"/>
<rect x="991.60" y="904.60" width="9.80" height="2.8" fill="none" stroke="#ff8c00" stroke-width="1.2"/>
<rect x="992.60" y="908.60" width="8.80" height="2.8" fill="none" stroke="#c89000" stroke-width="1.2"/>
<rect x="990.60" y="912.60" width="10.80" height="2.8" fill="none" stroke="#ff8c00" stroke-width="1.2"/>
<rect x="991.60" y="916.60" width="9.80" height="2.8" fill="none" stroke="#c89000" stroke-width="1.2"/>
<rect x="992.60" y="920.60" width="8.80" height="2.8" fill="none" stroke="#ff8c00" stroke-width="1.2"/>
<rect x="990.60" y="924.60" width="10.80" height="2.8" fill="none" stroke="#c89000" stroke-width="1.2"/>
<rect x="991.60" y="928.60" width="9.80" height="2.8" fill="none" stroke="#ff8c00" stroke-width="1.2"/>
<rect x="1205.60" y="782.60" width="5.80" height="2.8" fill="none" stroke="#c89000" stroke-width="1.2"/>
<rect x="1204.80" y="786.10" width="6.60" height="2.8" fill="none" stroke="#c89000" stroke-width="1.2"/>
<rect x="1201.60" y="789.60" width="9.80" height="2.8" fill="none" stroke="#ff8c00" stroke-width="1.2"/>
<rect x="1204.60" y="793.30" width="6.80" height="2.8" fill="none" stroke="#c89000" stroke-width="1.2"/>
<rect x="1202.60" y="796.20" width="8.80" height="2.8" fill="none" stroke="#ff8c00" stroke-width="1.2"/>
<rect x="1201.60" y="800.10" width="9.80" height="2.8" fill="none" stroke="#ff8c00" stroke-width="1.2"/>
<rect x="1200.60" y="804.00" width="10.80" height="2.8" fill="none" stroke="#f0f000" stroke-width="1.2"/>
<rect x="1198.80" y="808.40" width="12.60" height="2.8" fill="none" stroke="#f0f000" stroke-width="1.2"/>
<rect x="1196.90" y="811.60" width="14.50" height="2.8" fill="none" stroke="#f0f000" stroke-width="1.2"/>
<rect x="1190.80" y="815.10" width="20.60" height="2.8" fill="none" stroke="#00e000" stroke-width="1.2"/>
<rect x="1196.90" y="819.50" width="14.50" height="2.8" fill="none" stroke="#f0f000" stroke-width="1.2"/>
<rect x="1198.60" y="823.40" width="12.80" height="2.8" fill="none" stroke="#f0f000" stroke-width="1.2"/>
<rect x="1197.60" y="826.70" width="13.80" height="2.8" fill="none" stroke="#f0f000" stroke-width="1.2"/>
<rect x="1193.60" y="830.60" width="17.80" height="2.8" fill="none" stroke="#00e000" stroke-width="1.2"/>
<rect x="1194.90" y="834.60" width="16.50" height="2.8" fill="none" stroke="#00e000" stroke-width="1.2"/>
<rect x="1195.10" y="838.40" width="16.30" height="2.8" fill="none" stroke="#00e000" stroke-width="1.2"/>
<rect x="1195.90" y="841.80" width="15.50" height="2.8" fill="none" stroke="#f0f000" stroke-width="1.2"/>
<rect x="1197.60" y="845.60" width="13.80" height="2.8" fill="none" stroke="#f0f000" stroke-width="1.2"/>
<rect x="1199.80" y="849.00" width="11.60" height="2.8" fill="none" stroke="#f0f000" stroke-width="1.2"/>
<rect x="1202.80" y="852.40" width="8.60" height="2.8" fill="none" stroke="#ff8c00" stroke-width="1.2"/>
<rect x="1202.80" y="856.60" width="8.60" height="2.8" fill="none" stroke="#ff8c00" stroke-width="1.2"/>
<rect x="1203.60" y="860.60" width="7.80" height="2.8" fill="none" stroke="#c89000" stroke-width="1.2"/>
<rect x="1203.60" y="864.40" width="7.80" height="2.8" fill="none" stroke="#ff8c00" stroke-width="1.2"/>
<rect x="1204.60" y="867.80" width="6.80" height="2.8" fill="none" stroke="#c89000" stroke-width="1.2"/>
<rect x="1205.60" y="871.60" width="5.80" height="2.8" fill="none" stroke="#c89000" stroke-width="1.2"/>
<rect x="1207.60" y="875.60" width="3.80" height="2.8" fill="none" stroke="#e80000" stroke-width="1.2"/>
<rect x="1206.60" y="878.60" width="4.80" height="2.8" fill="none" stroke="#c89000" stroke-width="1.2"/>
<rect x="1206.60" y="882.60" width="4.80" height="2.8" fill="none" stroke="#e80000" stroke-width="1.2"/>
<rect x="1209.60" y="886.30" width="1.80" height="2.8" fill="none" stroke="#e80000" stroke-width="1.2"/>
<rect x="1207.60" y="890.60" width="3.80" height="2.8" fill="none" stroke="#e80000" stroke-width="1.2"/>
<rect x="1395.60" y="696.60" width="5.80" height="2.8" fill="none" stroke="#c89000" stroke-width="1.2"/>
<rect x="1394.60" y="700.60" width="6.80" height="2.8" fill="none" stroke="#c89000" stroke-width="1.2"/>
<rect x="1397.60" y="704.10" width="3.80" height="2.8" fill="none" stroke="#e80000" stroke-width="1.2"/>
<rect x="1395.50" y="707.60" width="5.90" height="2.8" fill="none" stroke="#c89000" stroke-width="1.2"/>
<rect x="1397.60" y="711.20" width="3.80" height="2.8" fill="none" stroke="#e80000" stroke-width="1.2"/>
<rect x="1395.50" y="714.60" width="5.90" height="2.8" fill="none" stroke="#c89000" stroke-width="1.2"/>
<rect x="1395.60" y="718.60" width="5.80" height="2.8" fill="none" stroke="#c89000" stroke-width="1.2"/>
<rect x="1392.60" y="722.40" width="8.80" height="2.8" fill="none" stroke="#ff8c00" stroke-width="1.2"/>
<rect x="1390.60" y="725.90" width="10.80" height="2.8" fill="none" stroke="#ff8c00" stroke-width="1.2"/>
<rect x="1385.60" y="804.80" width="15.80" height="2.8" fill="none" stroke="#f0f000" stroke-width="1.2"/>
<rect x="1385.60" y="808.20" width="15.80" height="2.8" fill="none" stroke="#f0f000" stroke-width="1.2"/>
<rect x="1391.60" y="812.10" width="9.80" height="2.8" fill="none" stroke="#ff8c00" stroke-width="1.2"/>
<rect x="1397.60" y="815.90" width="3.80" height="2.8" fill="none" stroke="#e80000" stroke-width="1.2"/>
<rect x="249.0" y="718.5" width="2.5" height="3" fill="none" stroke="#d80000" stroke-width="1"/>
<rect x="249.0" y="722.5" width="2.5" height="3" fill="none" stroke="#d80000" stroke-width="1"/>
<rect x="249.0" y="726.5" width="2.5" height="3" fill="none" stroke="#d80000" stroke-width="1"/>
<rect x="249.0" y="730.5" width="2.5" height="3" fill="none" stroke="#d80000" stroke-width="1"/>
<rect x="249.0" y="734.5" width="2.5" height="3" fill="none" stroke="#d80000" stroke-width="1"/>
<rect x="249.0" y="738.5" width="2.5" height="3" fill="none" stroke="#d80000" stroke-width="1"/>
<rect x="249.0" y="742.5" width="2.5" height="3" fill="none" stroke="#d80000" stroke-width="1"/>
<rect x="249.0" y="746.5" width="2.5" height="3" fill="none" stroke="#d80000" stroke-width="1"/>
<rect x="469.5" y="666.5" width="2.5" height="3" fill="none" stroke="#d80000" stroke-width="1"/>
<rect x="469.5" y="670.5" width="2.5" height="3" fill="none" stroke="#d80000" stroke-width="1"/>
<rect x="469.5" y="674.5" width="2.5" height="3" fill="none" stroke="#d80000" stroke-width="1"/>
<rect x="469.5" y="678.5" width="2.5" height="3" fill="none" stroke="#d80000" stroke-width="1"/>
<rect x="469.5" y="682.5" width="2.5" height="3" fill="none" stroke="#d80000" stroke-width="1"/>
<rect x="469.5" y="686.5" width="2.5" height="3" fill="none" stroke="#d80000" stroke-width="1"/>
<rect x="469.5" y="690.5" width="2.5" height="3" fill="none" stroke="#d80000" stroke-width="1"/>
<rect x="469.5" y="694.5" width="2.5" height="3" fill="none" stroke="#d80000" stroke-width="1"/>
<rect x="469.5" y="698.5" width="2.5" height="3" fill="none" stroke="#d80000" stroke-width="1"/>
<rect x="469.5" y="702.5" width="2.5" height="3" fill="none" stroke="#d80000" stroke-width="1"/>
<rect x="467.5" y="648.5" width="4.5" height="3" fill="none" stroke="#d80000" stroke-width="1"/>
<rect x="467.5" y="652.5" width="4.5" height="3" fill="none" stroke="#d80000" stroke-width="1"/>
<rect x="467.5" y="656.5" width="4.5" height="3" fill="none" stroke="#d80000" stroke-width="1"/>
<rect x="467.5" y="660.5" width="4.5" height="3" fill="none" stroke="#d80000" stroke-width="1"/>
<rect x="999.5" y="572.5" width="2.0" height="3" fill="none" stroke="#d80000" stroke-width="1"/>
<rect x="999.5" y="576.5" width="2.0" height="3" fill="none" stroke="#d80000" stroke-width="1"/>
<rect x="999.5" y="580.5" width="2.0" height="3" fill="none" stroke="#d80000" stroke-width="1"/>
<rect x="999.5" y="584.5" width="2.0" height="3" fill="none" stroke="#d80000" stroke-width="1"/>
<rect x="999.5" y="588.5" width="2.0" height="3" fill="none" stroke="#d80000" stroke-width="1"/>
<rect x="999.5" y="592.5" width="2.0" height="3" fill="none" stroke="#d80000" stroke-width="1"/>
<rect x="999.5" y="596.5" width="2.0" height="3" fill="none" stroke="#d80000" stroke-width="1"/>
<rect x="999.5" y="600.5" width="2.0" height="3" fill="none" stroke="#d80000" stroke-width="1"/>
<rect x="999.5" y="604.5" width="2.0" height="3" fill="none" stroke="#d80000" stroke-width="1"/>
<rect x="999.5" y="608.5" width="2.0" height="3" fill="none" stroke="#d80000" stroke-width="1"/>
<rect x="999.5" y="612.5" width="2.0" height="3" fill="none" stroke="#d80000" stroke-width="1"/>
<rect x="1209.0" y="744.5" width="2.5" height="3" fill="none" stroke="#d80000" stroke-width="1"/>
<rect x="1209.0" y="748.5" width="2.5" height="3" fill="none" stroke="#d80000" stroke-width="1"/>
<rect x="1209.0" y="752.5" width="2.5" height="3" fill="none" stroke="#d80000" stroke-width="1"/>
<rect x="1209.0" y="756.5" width="2.5" height="3" fill="none" stroke="#d80000" stroke-width="1"/>
<rect x="1209.0" y="760.5" width="2.5" height="3" fill="none" stroke="#d80000" stroke-width="1"/>
<rect x="1209.0" y="764.5" width="2.5" height="3" fill="none" stroke="#d80000" stroke-width="1"/>
<rect x="1209.0" y="768.5" width="2.5" height="3" fill="none" stroke="#d80000" stroke-width="1"/>
<rect x="1209.0" y="772.5" width="2.5" height="3" fill="none" stroke="#d80000" stroke-width="1"/>
<rect x="1209.0" y="776.5" width="2.5" height="3" fill="none" stroke="#d80000" stroke-width="1"/>
<rect x="1209.0" y="893.5" width="2.5" height="3" fill="none" stroke="#d80000" stroke-width="1"/>
<rect x="1209.0" y="897.5" width="2.5" height="3" fill="none" stroke="#d80000" stroke-width="1"/>
<rect x="1209.0" y="901.5" width="2.5" height="3" fill="none" stroke="#d80000" stroke-width="1"/>
<rect x="1209.0" y="905.5" width="2.5" height="3" fill="none" stroke="#d80000" stroke-width="1"/>
<rect x="1209.0" y="909.5" width="2.5" height="3" fill="none" stroke="#d80000" stroke-width="1"/>
<rect x="1209.0" y="913.5" width="2.5" height="3" fill="none" stroke="#d80000" stroke-width="1"/>
<rect x="1209.0" y="917.5" width="2.5" height="3" fill="none" stroke="#d80000" stroke-width="1"/>
<rect x="1209.0" y="921.5" width="2.5" height="3" fill="none" stroke="#d80000" stroke-width="1"/>
<rect x="1209.0" y="925.5" width="2.5" height="3" fill="none" stroke="#d80000" stroke-width="1"/>
<rect x="1399.0" y="577.5" width="2.5" height="3" fill="none" stroke="#d80000" stroke-width="1"/>
<rect x="1399.0" y="581.5" width="2.5" height="3" fill="none" stroke="#d80000" stroke-width="1"/>
<rect x="1399.0" y="585.5" width="2.5" height="3" fill="none" stroke="#d80000" stroke-width="1"/>
<rect x="1399.0" y="589.5" width="2.5" height="3" fill="none" stroke="#d80000" stroke-width="1"/>
<rect x="1399.0" y="593.5" width="2.5" height="3" fill="none" stroke="#d80000" stroke-width="1"/>
<rect x="1399.0" y="597.5" width="2.5" height="3" fill="none" stroke="#d80000" stroke-width="1"/>
<rect x="1399.0" y="601.5" width="2.5" height="3" fill="none" stroke="#d80000" stroke-width="1"/>
<rect x="1399.0" y="605.5" width="2.5" height="3" fill="none" stroke="#d80000" stroke-width="1"/>
<rect x="1399.0" y="609.5" width="2.5" height="3" fill="none" stroke="#d80000" stroke-width="1"/>
<rect x="1399.0" y="613.5" width="2.5" height="3" fill="none" stroke="#d80000" stroke-width="1"/>
<rect x="1399.0" y="617.5" width="2.5" height="3" fill="none" stroke="#d80000" stroke-width="1"/>
<rect x="1399.0" y="621.5" width="2.5" height="3" fill="none" stroke="#d80000" stroke-width="1"/>
<rect x="1399.0" y="625.5" width="2.5" height="3" fill="none" stroke="#d80000" stroke-width="1"/>
<rect x="1399.0" y="629.5" width="2.5" height="3" fill="none" stroke="#d80000" stroke-width="1"/>
<rect x="1399.0" y="633.5" width="2.5" height="3" fill="none" stroke="#d80000" stroke-width="1"/>
<rect x="1399.0" y="637.5" width="2.5" height="3" fill="none" stroke="#d80000" stroke-width="1"/>
<rect x="1399.0" y="641.5" width="2.5" height="3" fill="none" stroke="#d80000" stroke-width="1"/>
<rect x="1399.0" y="645.5" width="2.5" height="3" fill="none" stroke="#d80000" stroke-width="1"/>
<rect x="1399.0" y="649.5" width="2.5" height="3" fill="none" stroke="#d80000" stroke-width="1"/>
<rect x="1399.0" y="653.5" width="2.5" height="3" fill="none" stroke="#d80000" stroke-width="1"/>
<rect x="1399.0" y="657.5" width="2.5" height="3" fill="none" stroke="#d80000" stroke-width="1"/>
<rect x="1399.0" y="661.5" width="2.5" height="3" fill="none" stroke="#d80000" stroke-width="1"/>
<rect x="1399.0" y="665.5" width="2.5" height="3" fill="none" stroke="#d80000" stroke-width="1"/>
<rect x="1399.0" y="669.5" width="2.5" height="3" fill="none" stroke="#d80000" stroke-width="1"/>
<rect x="1399.0" y="673.5" width="2.5" height="3" fill="none" stroke="#d80000" stroke-width="1"/>
<rect x="1399.0" y="677.5" width="2.5" height="3" fill="none" stroke="#d80000" stroke-width="1"/>
<rect x="1399.0" y="681.5" width="2.5" height="3" fill="none" stroke="#d80000" stroke-width="1"/>
<rect x="1399.0" y="685.5" width="2.5" height="3" fill="none" stroke="#d80000" stroke-width="1"/>
<rect x="1399.0" y="689.5" width="2.5" height="3" fill="none" stroke="#d80000" stroke-width="1"/>
<rect x="1399.0" y="819.5" width="2.5" height="3" fill="none" stroke="#d80000" stroke-width="1"/>
<rect x="1399.0" y="823.5" width="2.5" height="3" fill="none" stroke="#d80000" stroke-width="1"/>
<rect x="1399.0" y="827.5" width="2.5" height="3" fill="none" stroke="#d80000" stroke-width="1"/>
<rect x="1399.0" y="831.5" width="2.5" height="3" fill="none" stroke="#d80000" stroke-width="1"/>
<rect x="1399.0" y="835.5" width="2.5" height="3" fill="none" stroke="#d80000" stroke-width="1"/>
<polygon points="212,675 216,670 216,680" fill="#ff0000"/>
<polygon points="912,817 916,812 916,822" fill="#ff0000"/>
<polygon points="1163,612 1167,607 1167,617" fill="#ff0000"/>
<polygon points="1350,757 1354,752 1354,762" fill="#ff0000"/>
</svg>
<span class="c" style="left:-2px;top:73.2px;font-size:13.6px;font-weight:bold;color:#00ff00;-webkit-text-stroke:0.12px #00ff00;transform:scaleX(0.7889);transform-origin:0 0">3T23T</span>
<span class="c" style="left:-2px;top:90.0px;font-size:13.6px;font-weight:bold;color:#00ff00;-webkit-text-stroke:0.12px #00ff00;transform:scaleX(0.8314);transform-origin:0 0">3829329</span>
<span class="c" style="left:21.5px;top:394.2px;font-size:13.6px;font-weight:bold;color:#00ff00;-webkit-text-stroke:0.12px #00ff00;transform:scaleX(0.8325);transform-origin:0 0">82T82T82T82T82T82T</span>
<span class="c" style="left:21.5px;top:410.9px;font-size:13.6px;font-weight:bold;color:#00ff00;-webkit-text-stroke:0.12px #00ff00;transform:scaleX(0.7369);transform-origin:0 0">805886588658865886588</span>
<span class="c" style="left:-6px;top:603.4px;font-size:13.6px;font-weight:bold;color:#ff0000;-webkit-text-stroke:0.12px #ff0000;transform:scaleX(0.6616);transform-origin:0 0">23T23T</span>
<span class="c" style="left:-2px;top:619.6px;font-size:13.6px;font-weight:bold;color:#ff0000;-webkit-text-stroke:0.12px #ff0000;transform:scaleX(0.9256);transform-origin:0 0">29329</span>
<span class="c" style="left:12px;top:771.4px;font-size:13.6px;font-weight:bold;color:#ff0000;-webkit-text-stroke:0.12px #ff0000;transform:scaleX(0.8628);transform-origin:0 0">-16882T82T82T82T82T82T82T82T82T82T82T82T</span>
<span class="c" style="left:12px;top:787.0px;font-size:13.6px;font-weight:bold;color:#ff0000;-webkit-text-stroke:0.12px #ff0000;transform:scaleX(0.8850);transform-origin:0 0">805086508650865086508650865086508650865086</span>
<span class="c" style="left:272px;top:725.9px;font-size:13.6px;font-weight:bold;color:#ff0000;-webkit-text-stroke:0.12px #ff0000;transform:scaleX(0.8581);transform-origin:0 0">-70T82T82T82T82T82T82T82T82T82T82T</span>
<span class="c" style="left:272px;top:742.4px;font-size:13.6px;font-weight:bold;color:#ff0000;-webkit-text-stroke:0.12px #ff0000;transform:scaleX(0.9096);transform-origin:0 0">45245245245245245245245245245212112</span>
<span class="c" style="left:921px;top:524.1px;font-size:13.6px;font-weight:bold;color:#00ff00;-webkit-text-stroke:0.12px #00ff00;transform:scaleX(0.8610);transform-origin:0 0">T18T18T18T18T18T</span>
<span class="c" style="left:920px;top:540.4px;font-size:13.6px;font-weight:bold;color:#00ff00;-webkit-text-stroke:0.12px #00ff00;transform:scaleX(0.8068);transform-origin:0 0">04504504504504505045</span>
<span class="c" style="left:1021.6px;top:435.4px;font-size:13.6px;font-weight:bold;color:#00ff00;-webkit-text-stroke:0.12px #00ff00;transform:scaleX(0.9445);transform-origin:0 0">142T25T25T25T25T25T25T25T25T25T</span>
<span class="c" style="left:1021.6px;top:452.3px;font-size:13.6px;font-weight:bold;color:#00ff00;-webkit-text-stroke:0.12px #00ff00;transform:scaleX(0.9391);transform-origin:0 0">7957957957957957957957957957959550</span>
<span class="c" style="left:1241.5px;top:528.4px;font-size:13.6px;font-weight:bold;color:#00ff00;-webkit-text-stroke:0.12px #00ff00;transform:scaleX(0.8561);transform-origin:0 0">70T70T70T70T70T70T70T70T70T</span>
<span class="c" style="left:1241.5px;top:545.2px;font-size:13.6px;font-weight:bold;color:#00ff00;-webkit-text-stroke:0.12px #00ff00;transform:scaleX(1.0250);transform-origin:0 0">31636363636363636363632632</span>
<span class="c" style="left:1232px;top:859.6px;font-size:13.6px;font-weight:bold;color:#ff0000;-webkit-text-stroke:0.12px #ff0000;transform:scaleX(0.8543);transform-origin:0 0">-95T70T70T70T70T70T70T70T70T70T</span>
<span class="c" style="left:1233px;top:876.4px;font-size:13.6px;font-weight:bold;color:#ff0000;-webkit-text-stroke:0.12px #ff0000;transform:scaleX(0.9700);transform-origin:0 0">316363636363636363636363632136</span>
<span class="c" style="left:1417px;top:204.7px;font-size:11px;color:#e01010;transform:scaleX(0.9956);transform-origin:0 0">R2</span>
<span class="c" style="left:1417px;top:401.6px;font-size:11px;color:#e01010;transform:scaleX(0.9956);transform-origin:0 0">R1</span>
<span class="c" style="left:1417px;top:670.6px;font-size:11px;color:#e020e0;transform:scaleX(0.9532);transform-origin:0 0">PP</span>
<span class="c" style="left:1418px;top:869.6px;font-size:11px;color:#20e020;transform:scaleX(0.8167);transform-origin:0 0">S1</span>
<div id="tb"><div style="position:absolute;left:0px;top:0px;width:1509px;height:15px;background:#f0f0f0"></div>
<div style="position:absolute;left:0px;top:15px;width:1509px;height:1px;background:#a0a0a0"></div>
<div style="position:absolute;left:0px;top:16px;width:1509px;height:1px;background:#6e6e6e"></div>
<div style="position:absolute;left:0px;top:0px;width:43px;height:15px;background:#55f555"></div>
<div style="position:absolute;left:43px;top:0px;width:1px;height:15px;background:#a0a0a0"></div>
<div style="position:absolute;left:45px;top:0px;width:31px;height:15px;background:#00ff00"></div>
<div style="position:absolute;left:76px;top:0px;width:1px;height:15px;background:#a0a0a0"></div>
<div style="position:absolute;left:76px;top:0px;width:31px;height:15px;background:#f0f0f0"></div>
<div style="position:absolute;left:107px;top:0px;width:1px;height:15px;background:#a0a0a0"></div>
<div style="position:absolute;left:109px;top:0px;width:30px;height:15px;background:#00ff00"></div>
<div style="position:absolute;left:139px;top:0px;width:1px;height:15px;background:#a0a0a0"></div>
<div style="position:absolute;left:140px;top:0px;width:30px;height:15px;background:#f0f0f0"></div>
<div style="position:absolute;left:170px;top:0px;width:1px;height:15px;background:#a0a0a0"></div>
<div style="position:absolute;left:171px;top:0px;width:32px;height:15px;background:#f0f0f0"></div>
<div style="position:absolute;left:203px;top:0px;width:1px;height:15px;background:#a0a0a0"></div>
<div style="position:absolute;left:204px;top:0px;width:33px;height:15px;background:#f0f0f0"></div>
<div style="position:absolute;left:237px;top:0px;width:1px;height:15px;background:#a0a0a0"></div>
<div style="position:absolute;left:239px;top:0px;width:30px;height:15px;background:#00ff00"></div>
<div style="position:absolute;left:269px;top:0px;width:1px;height:15px;background:#a0a0a0"></div>
<div style="position:absolute;left:270px;top:0px;width:31px;height:15px;background:#f0f0f0"></div>
<div style="position:absolute;left:301px;top:0px;width:1px;height:15px;background:#a0a0a0"></div>
<div style="position:absolute;left:302px;top:0px;width:30px;height:15px;background:#00ff00"></div>
<div style="position:absolute;left:332px;top:0px;width:1px;height:15px;background:#a0a0a0"></div>
<div style="position:absolute;left:334px;top:0px;width:30px;height:15px;background:#00ff00"></div>
<div style="position:absolute;left:364px;top:0px;width:1px;height:15px;background:#a0a0a0"></div>
<div style="position:absolute;left:365px;top:0px;width:38px;height:15px;background-color:#fff;background-image:repeating-conic-gradient(#000 0 25%,#fff 0 50%);background-size:2px 2px;opacity:1"></div>
<div style="position:absolute;left:403px;top:0px;width:1px;height:15px;background:#a0a0a0"></div>
<div style="position:absolute;left:404px;top:0px;width:30px;height:15px;background:#ff0000"></div>
<div style="position:absolute;left:434px;top:0px;width:1px;height:15px;background:#a0a0a0"></div>
<div style="position:absolute;left:435px;top:0px;width:41px;height:15px;background-color:#fff;background-image:repeating-conic-gradient(#000 0 25%,#fff 0 50%);background-size:2px 2px;opacity:1"></div>
<div style="position:absolute;left:476px;top:0px;width:1px;height:15px;background:#a0a0a0"></div>
<div style="position:absolute;left:476px;top:0px;width:33px;height:15px;background:#f0f0f0"></div>
<div style="position:absolute;left:509px;top:0px;width:1px;height:15px;background:#a0a0a0"></div>
<div style="position:absolute;left:510px;top:0px;width:35px;height:15px;background:#f0f0f0"></div>
<div style="position:absolute;left:545px;top:0px;width:1px;height:15px;background:#a0a0a0"></div>
<div style="position:absolute;left:0px;top:13px;width:43px;height:2px;background:#fff"></div>
<div style="position:absolute;left:41px;top:0px;width:2px;height:15px;background:#fff"></div>
<svg style="position:absolute;left:0;top:0" width="560" height="16"><line x1="50.5" y1="10.5" x2="56" y2="5" stroke="#000" stroke-width="1.2" stroke-dasharray="1.2,0.6"/><rect x="56" y="0" width="4" height="1" fill="#000"/><rect x="245.5" y="-4" width="19" height="7" fill="none" stroke="#000"/><rect x="338.5" y="1.5" width="3" height="3" fill="none" stroke="#000"/><line x1="341.5" y1="1.5" x2="343" y2="0" stroke="#000"/><rect x="352.5" y="-3.5" width="9" height="8" fill="#fff" stroke="#000"/><line x1="352" y1="1.5" x2="362" y2="1.5" stroke="#000"/><line x1="355.5" y1="0" x2="355.5" y2="4" stroke="#000"/><line x1="358.5" y1="0" x2="358.5" y2="4" stroke="#000"/><rect x="375.5" y="-1.5" width="7" height="4" fill="#fff" stroke="#000"/><rect x="374" y="3" width="11" height="3.5" rx="1" fill="#000"/><path d="M388 0 L393 5 L398 0 M393 -1 L393 5.5" stroke="#fff" stroke-width="3" fill="none"/><path d="M388 0 L393 5 L398 0 M393 -1 L393 5.5" stroke="#000" stroke-width="1.1" fill="none"/><rect x="419" y="0" width="1" height="5.5" fill="#000"/></svg></div>
<div style="position:absolute;left:11px;top:18px;width:58px;height:13px;background:#fff"></div>
<div style="position:absolute;left:70px;top:18px;width:43px;height:13px;background:#fff"></div>
<div style="position:absolute;left:115px;top:18px;width:183px;height:13px;background:#fff"></div>
<div style="position:absolute;left:300px;top:18px;width:58px;height:13px;background:#fff"></div>
<span class="t" style="left:146px;top:-3.62px;font-size:12.5px;color:#000;font-weight:bold;font-family:'Liberation Sans';transform:scaleX(0.8320);transform-origin:0 0;">Fan</span>
<span class="t" style="left:177.5px;top:-3.62px;font-size:12.5px;color:#000;font-weight:bold;font-family:'Liberation Sans';transform:scaleX(0.9049);transform-origin:0 0;">Proj</span>
<span class="t" style="left:208px;top:-3.62px;font-size:12.5px;color:#000;font-weight:bold;font-family:'Liberation Sans';transform:scaleX(0.7977);transform-origin:0 0;">Retrc</span>
<span class="t" style="left:273px;top:-3.62px;font-size:12.5px;color:#000;font-weight:bold;font-family:'Liberation Sans';transform:scaleX(0.8948);transform-origin:0 0;">angl</span>
<span class="t" style="left:443.5px;top:-0.62px;font-size:12.5px;color:#000;font-weight:bold;font-family:'Liberation Sans';transform:scaleX(0.9794);transform-origin:0 0;">Fills</span>
<span class="t" style="left:480.5px;top:-0.62px;font-size:12.5px;color:#000;font-weight:bold;font-family:'Liberation Sans';transform:scaleX(0.9726);transform-origin:0 0;">Line</span>
<span class="t" style="left:0px;top:18.80px;font-size:12.0px;color:#fff;font-weight:normal;font-family:'Liberation Sans';">.0</span>
<span class="t" style="left:12px;top:18.80px;font-size:12.0px;color:#000;font-weight:normal;font-family:'Liberation Sans';transform:scaleX(0.9122);transform-origin:0 0;">2023-03-09</span>
<span class="t" style="left:72px;top:18.80px;font-size:12.0px;color:#000;font-weight:normal;font-family:'Liberation Sans';transform:scaleX(0.8562);transform-origin:0 0;">13:51:47</span>
<span class="t" style="left:117px;top:18.80px;font-size:12.0px;color:#000;font-weight:normal;font-family:'Liberation Sans';transform:scaleX(0.8996);transform-origin:0 0;">Period: 1 Days, TPOs: 0.01 x 30 min</span>
<span class="t" style="left:302px;top:18.80px;font-size:12.0px;color:#000;font-weight:normal;font-family:'Liberation Sans';transform:scaleX(0.8739);transform-origin:0 0;">DV: 317137</span>
<span class="t" style="left:362px;top:18.80px;font-size:12.0px;color:#fff;font-weight:normal;font-family:'Liberation Sans';transform:scaleX(0.9094);transform-origin:0 0;">Zig Zag</span>
<span class="t" style="left:409px;top:18.80px;font-size:12.0px;color:#fff;font-weight:normal;font-family:'Liberation Sans';transform:scaleX(0.9377);transform-origin:0 0;">(High, Low, 1, 0, 0, 0, Total Volume, No, No, No, No, No, Ticks, Yes, No, No, No, No, No, No, Yes, Yes, Tick Offset, 5, Slope, No, No, Center, Center)</span>
<span class="t" style="left:1152px;top:18.80px;font-size:12.0px;color:#fff;font-weight:normal;font-family:'Liberation Sans';transform:scaleX(0.9465);transform-origin:0 0;">Pivot Points-Daily</span>
<span class="t" style="left:1248px;top:18.80px;font-size:12.0px;color:#ff1010;font-weight:normal;font-family:'Liberation Sans';transform:scaleX(0.8685);transform-origin:0 0;">R1: 132.21</span>
<span class="t" style="left:1305px;top:18.80px;font-size:12.0px;color:#ff1010;font-weight:normal;font-family:'Liberation Sans';transform:scaleX(0.8685);transform-origin:0 0;">R2: 132.74</span>
<span class="t" style="left:1363px;top:18.80px;font-size:12.0px;color:#10e010;font-weight:normal;font-family:'Liberation Sans';transform:scaleX(0.8611);transform-origin:0 0;">S1: 130.96</span>
<span class="t" style="left:1420px;top:18.80px;font-size:12.0px;color:#10e010;font-weight:normal;font-family:'Liberation Sans';transform:scaleX(0.8784);transform-origin:0 0;">S2: 130.24</span>
<span class="t" style="left:1477px;top:18.80px;font-size:12.0px;color:#ff1010;font-weight:normal;font-family:'Liberation Sans';transform:scaleX(0.8220);transform-origin:0 0;">R.5: 132.00</span>
<div id="bgdlg"><div style="position:absolute;left:127px;top:93px;width:796px;height:466px;background:#f0f0f0;border-radius:7px;box-shadow:0 0 6px rgba(0,0,0,0.45);border:1px solid #bdbdbd;box-sizing:border-box"></div>
<div style="position:absolute;left:128px;top:94px;width:794px;height:27px;background:#f3f3f3;border-radius:7px 7px 0 0"></div>
<svg style="position:absolute;left:900px;top:100px" width="16" height="16"><path d="M2.5 2.5 L12.5 12.5 M12.5 2.5 L2.5 12.5" stroke="#777" stroke-width="1.1"/></svg>
<div style="position:absolute;left:860px;top:157px;width:49px;height:28px;background:#e8e8e8;border-right:2px solid #8a8a8a;border-bottom:2px solid #8a8a8a;box-sizing:border-box"></div>
<div style="position:absolute;left:860px;top:197px;width:49px;height:28px;background:#e8e8e8;border-right:2px solid #8a8a8a;border-bottom:2px solid #8a8a8a;box-sizing:border-box"></div>
<div style="position:absolute;left:860px;top:253px;width:49px;height:28px;background:#e8e8e8;border-right:2px solid #8a8a8a;border-bottom:2px solid #8a8a8a;box-sizing:border-box"></div>
<div style="position:absolute;left:860px;top:341px;width:49px;height:28px;background:#e8e8e8;border-right:2px solid #8a8a8a;border-bottom:2px solid #8a8a8a;box-sizing:border-box"></div>
<div style="position:absolute;left:860px;top:389px;width:49px;height:28px;background:#e8e8e8;border-right:2px solid #8a8a8a;border-bottom:2px solid #8a8a8a;box-sizing:border-box"></div>
<div style="position:absolute;left:860px;top:445px;width:48px;height:99px;border-right:1px solid #a8a8a8;border-bottom:1px solid #a8a8a8;border-top:1px solid #a8a8a8;box-shadow:1px 1px 0 #fff;box-sizing:border-box"></div>
<div style="position:absolute;left:860px;top:449px;width:45px;height:27px;background:#e4e4e4;border-right:2px solid #7a7a7a;border-bottom:2px solid #7a7a7a;box-sizing:border-box"></div>
<div style="position:absolute;left:860px;top:481px;width:45px;height:28px;background:#e4e4e4;border-right:2px solid #7a7a7a;border-bottom:2px solid #7a7a7a;box-sizing:border-box"></div>
<div style="position:absolute;left:860px;top:513px;width:45px;height:28px;background:#e4e4e4;border-right:2px solid #7a7a7a;border-bottom:2px solid #7a7a7a;box-sizing:border-box"></div></div>
<div id="dlg"><div style="position:absolute;left:131px;top:30px;width:766.5px;height:618px;background:#f0f0f0;border-radius:6px;box-shadow:0 2px 10px rgba(0,0,0,0.5);border:1px solid #c4c4c4;box-sizing:border-box"></div>
<div style="position:absolute;left:132px;top:31px;width:764.5px;height:29px;background:#f3f3f3;border-radius:6px 6px 0 0"></div>
<svg style="position:absolute;left:876px;top:38px" width="12" height="12"><path d="M1 1 L11 11 M11 1 L1 11" stroke="#7c7c7c" stroke-width="1"/></svg>
<div style="position:absolute;left:145px;top:97px;width:740px;height:493px;border-top:1px solid #fff;border-left:1px solid #fff;border-right:1px solid #a0a0a0;border-bottom:1px solid #a0a0a0;box-shadow:inset -1px -1px 0 #696969;box-sizing:border-box"></div>
<div style="position:absolute;left:146px;top:74px;width:127px;height:25px;background:#f0f0f0;border-top:1px solid #fff;border-left:1px solid #fff;border-right:1px solid #a0a0a0;box-shadow:1px 0 0 #696969;box-sizing:border-box;border-radius:2px 2px 0 0"></div>
<div style="position:absolute;left:273px;top:77px;width:76px;height:21px;background:#f0f0f0;border-top:1px solid #fff;border-left:1px solid #fff;border-right:1px solid #a0a0a0;box-shadow:1px 0 0 #696969;box-sizing:border-box"></div>
<div style="position:absolute;left:349px;top:77px;width:48px;height:21px;background:#f0f0f0;border-top:1px solid #fff;border-left:1px solid #fff;border-right:1px solid #a0a0a0;box-shadow:1px 0 0 #696969;box-sizing:border-box"></div>
<div style="position:absolute;left:147px;top:97px;width:125px;height:2px;background:#f0f0f0"></div>
<div style="position:absolute;left:161px;top:181px;width:207px;height:24px;background:#fff;border-top:1px solid #a0a0a0;border-left:1px solid #a0a0a0;border-bottom:1px solid #fff;border-right:1px solid #fff;box-shadow:inset 1px 1px 0 #696969, inset -1px -1px 0 #e3e3e3;box-sizing:border-box"></div>
<div style="position:absolute;left:350px;top:183px;width:16px;height:20px;background:#f0f0f0;border-top:1px solid #fff;border-left:1px solid #fff;border-bottom:1px solid #696969;border-right:1px solid #696969;box-shadow:inset -1px -1px 0 #a0a0a0, inset 1px 1px 0 #e3e3e3;box-sizing:border-box"></div>
<svg style="position:absolute;left:354px;top:191px" width="9" height="5"><path d="M0.5 0.5 L7.5 0.5 L4 4 Z" fill="#000"/></svg>
<div style="position:absolute;left:161px;top:233px;width:207px;height:23px;background:#fff;border-top:1px solid #a0a0a0;border-left:1px solid #a0a0a0;border-bottom:1px solid #fff;border-right:1px solid #fff;box-shadow:inset 1px 1px 0 #696969, inset -1px -1px 0 #e3e3e3;box-sizing:border-box"></div>
<div style="position:absolute;left:161px;top:285px;width:96px;height:23px;background:#fff;border-top:1px solid #a0a0a0;border-left:1px solid #a0a0a0;border-bottom:1px solid #fff;border-right:1px solid #fff;box-shadow:inset 1px 1px 0 #696969, inset -1px -1px 0 #e3e3e3;box-sizing:border-box"></div>
<div style="position:absolute;left:239px;top:287px;width:16px;height:19px;background:#f0f0f0;border-top:1px solid #fff;border-left:1px solid #fff;border-bottom:1px solid #696969;border-right:1px solid #696969;box-shadow:inset -1px -1px 0 #a0a0a0, inset 1px 1px 0 #e3e3e3;box-sizing:border-box"></div>
<svg style="position:absolute;left:243px;top:294px" width="9" height="5"><path d="M0.5 0.5 L7.5 0.5 L4 4 Z" fill="#000"/></svg>
<div style="position:absolute;left:271px;top:281px;width:98px;height:28px;background:#f0f0f0;border-top:1px solid #fff;border-left:1px solid #fff;border-bottom:1px solid #696969;border-right:1px solid #696969;box-shadow:inset -1px -1px 0 #a0a0a0, inset 1px 1px 0 #e3e3e3;box-sizing:border-box"></div>
<div style="position:absolute;left:161px;top:337px;width:168px;height:23px;background:#fff;border-top:1px solid #a0a0a0;border-left:1px solid #a0a0a0;border-bottom:1px solid #fff;border-right:1px solid #fff;box-shadow:inset 1px 1px 0 #696969, inset -1px -1px 0 #e3e3e3;box-sizing:border-box"></div>
<div style="position:absolute;left:311px;top:339px;width:16px;height:19px;background:#f0f0f0;border-top:1px solid #fff;border-left:1px solid #fff;border-bottom:1px solid #696969;border-right:1px solid #696969;box-shadow:inset -1px -1px 0 #a0a0a0, inset 1px 1px 0 #e3e3e3;box-sizing:border-box"></div>
<svg style="position:absolute;left:315px;top:346px" width="9" height="5"><path d="M0.5 0.5 L7.5 0.5 L4 4 Z" fill="#000"/></svg>
<div style="position:absolute;left:161px;top:374px;width:13px;height:13px;background:#fff;border-top:1px solid #a0a0a0;border-left:1px solid #a0a0a0;border-bottom:1px solid #fff;border-right:1px solid #fff;box-shadow:inset 1px 1px 0 #696969, inset -1px -1px 0 #e3e3e3;box-sizing:border-box"></div>
<div style="position:absolute;left:161px;top:398px;width:13px;height:13px;background:#fff;border-top:1px solid #a0a0a0;border-left:1px solid #a0a0a0;border-bottom:1px solid #fff;border-right:1px solid #fff;box-shadow:inset 1px 1px 0 #696969, inset -1px -1px 0 #e3e3e3;box-sizing:border-box"></div>
<div style="position:absolute;left:161px;top:428px;width:13px;height:13px;background:#fff;border-top:1px solid #a0a0a0;border-left:1px solid #a0a0a0;border-bottom:1px solid #fff;border-right:1px solid #fff;box-shadow:inset 1px 1px 0 #696969, inset -1px -1px 0 #e3e3e3;box-sizing:border-box"></div>
<div style="position:absolute;left:161px;top:458px;width:13px;height:13px;background:#fff;border-top:1px solid #a0a0a0;border-left:1px solid #a0a0a0;border-bottom:1px solid #fff;border-right:1px solid #fff;box-shadow:inset 1px 1px 0 #696969, inset -1px -1px 0 #e3e3e3;box-sizing:border-box"></div>
<div style="position:absolute;left:161px;top:501px;width:139px;height:23px;background:#f0f0f0;border-top:1px solid #a0a0a0;border-left:1px solid #a0a0a0;border-bottom:1px solid #fff;border-right:1px solid #fff;box-shadow:inset 1px 1px 0 #696969, inset -1px -1px 0 #e3e3e3;box-sizing:border-box"></div>
<div style="position:absolute;left:161px;top:532px;width:13px;height:13px;background:#fff;border-top:1px solid #a0a0a0;border-left:1px solid #a0a0a0;border-bottom:1px solid #fff;border-right:1px solid #fff;box-shadow:inset 1px 1px 0 #696969, inset -1px -1px 0 #e3e3e3;box-sizing:border-box"></div>
<svg style="position:absolute;left:161px;top:532px" width="13" height="13"><path d="M3 6 L5 8.5 L10 3.5" stroke="#000" stroke-width="1.8" fill="none"/></svg>
<div style="position:absolute;left:161px;top:556px;width:13px;height:13px;background:#fff;border-top:1px solid #a0a0a0;border-left:1px solid #a0a0a0;border-bottom:1px solid #fff;border-right:1px solid #fff;box-shadow:inset 1px 1px 0 #696969, inset -1px -1px 0 #e3e3e3;box-sizing:border-box"></div>
<svg style="position:absolute;left:161px;top:556px" width="13" height="13"><path d="M3 6 L5 8.5 L10 3.5" stroke="#000" stroke-width="1.8" fill="none"/></svg>
<div style="position:absolute;left:381px;top:113px;width:490px;height:399px;background:#f0f0f0;border-top:1px solid #a0a0a0;border-left:1px solid #a0a0a0;border-bottom:1px solid #fff;border-right:1px solid #fff;box-shadow:inset 1px 1px 0 #696969;box-sizing:border-box"></div>
<div style="position:absolute;left:383px;top:115px;width:469px;height:19px;background:#f0f0f0;border-bottom:1px solid #a0a0a0;box-sizing:border-box"></div>
<div style="position:absolute;left:704px;top:115px;width:1px;height:18px;background:#a0a0a0"></div>
<div style="position:absolute;left:705px;top:115px;width:1px;height:18px;background:#fff"></div>
<div style="position:absolute;left:383px;top:134px;width:469px;height:360px;background:#fff"></div>
<div style="position:absolute;left:383px;top:153px;width:469px;height:1px;background:#f0f0f0"></div>
<div style="position:absolute;left:383px;top:170px;width:469px;height:1px;background:#f0f0f0"></div>
<div style="position:absolute;left:383px;top:187px;width:469px;height:1px;background:#f0f0f0"></div>
<div style="position:absolute;left:383px;top:204px;width:469px;height:1px;background:#f0f0f0"></div>
<div style="position:absolute;left:383px;top:221px;width:469px;height:1px;background:#f0f0f0"></div>
<div style="position:absolute;left:383px;top:238px;width:469px;height:1px;background:#f0f0f0"></div>
<div style="position:absolute;left:383px;top:255px;width:469px;height:1px;background:#f0f0f0"></div>
<div style="position:absolute;left:383px;top:272px;width:469px;height:1px;background:#f0f0f0"></div>
<div style="position:absolute;left:383px;top:289px;width:469px;height:1px;background:#f0f0f0"></div>
<div style="position:absolute;left:383px;top:306px;width:469px;height:1px;background:#f0f0f0"></div>
<div style="position:absolute;left:383px;top:323px;width:469px;height:1px;background:#f0f0f0"></div>
<div style="position:absolute;left:383px;top:340px;width:469px;height:1px;background:#f0f0f0"></div>
<div style="position:absolute;left:383px;top:357px;width:469px;height:1px;background:#f0f0f0"></div>
<div style="position:absolute;left:383px;top:374px;width:469px;height:1px;background:#f0f0f0"></div>
<div style="position:absolute;left:383px;top:391px;width:469px;height:1px;background:#f0f0f0"></div>
<div style="position:absolute;left:383px;top:408px;width:469px;height:1px;background:#f0f0f0"></div>
<div style="position:absolute;left:383px;top:425px;width:469px;height:1px;background:#f0f0f0"></div>
<div style="position:absolute;left:383px;top:442px;width:469px;height:1px;background:#f0f0f0"></div>
<div style="position:absolute;left:383px;top:459px;width:469px;height:1px;background:#f0f0f0"></div>
<div style="position:absolute;left:383px;top:476px;width:469px;height:1px;background:#f0f0f0"></div>
<div style="position:absolute;left:383px;top:493px;width:469px;height:1px;background:#f0f0f0"></div>
<div style="position:absolute;left:383px;top:136px;width:469px;height:1px;background:#f0f0f0"></div>
<div style="position:absolute;left:852px;top:115px;width:18px;height:379px;background:#f0f0f0"></div>
<div style="position:absolute;left:860px;top:132px;width:2px;height:249px;background:#868686"></div>
<div style="position:absolute;left:383px;top:494px;width:469px;height:17px;background:#f0f0f0"></div>
<div style="position:absolute;left:400px;top:502px;width:422px;height:2px;background:#868686"></div>
<div style="position:absolute;left:381px;top:527px;width:489px;height:47px;border:1px solid #a0a0a0;box-shadow:1px 1px 0 #fff, inset 1px 1px 0 #fff;box-sizing:border-box"></div>
<div style="position:absolute;left:388px;top:522px;width:34px;height:10px;background:#f0f0f0"></div>
<div style="position:absolute;left:145px;top:600px;width:92px;height:28px;background:#f0f0f0;border-top:1px solid #fff;border-left:1px solid #fff;border-bottom:1px solid #696969;border-right:1px solid #696969;box-shadow:inset -1px -1px 0 #a0a0a0, inset 1px 1px 0 #e3e3e3;box-sizing:border-box"></div>
<div style="position:absolute;left:247px;top:600px;width:92px;height:28px;background:#f0f0f0;border-top:1px solid #fff;border-left:1px solid #fff;border-bottom:1px solid #696969;border-right:1px solid #696969;box-shadow:inset -1px -1px 0 #a0a0a0, inset 1px 1px 0 #e3e3e3;box-sizing:border-box"></div>
<div style="position:absolute;left:349px;top:600px;width:92px;height:28px;background:#f0f0f0;border-top:1px solid #fff;border-left:1px solid #fff;border-bottom:1px solid #696969;border-right:1px solid #696969;box-shadow:inset -1px -1px 0 #a0a0a0, inset 1px 1px 0 #e3e3e3;box-sizing:border-box"></div>
<div style="position:absolute;left:451px;top:600px;width:91px;height:28px;background:#f0f0f0;border-top:1px solid #fff;border-left:1px solid #fff;border-bottom:1px solid #696969;border-right:1px solid #696969;box-shadow:inset -1px -1px 0 #a0a0a0, inset 1px 1px 0 #e3e3e3;box-sizing:border-box"></div>
<div style="position:absolute;left:553px;top:600px;width:100px;height:28px;background:#f0f0f0;border-top:1px solid #fff;border-left:1px solid #fff;border-bottom:1px solid #696969;border-right:1px solid #696969;box-shadow:inset -1px -1px 0 #a0a0a0, inset 1px 1px 0 #e3e3e3;box-sizing:border-box"></div>
<div style="position:absolute;left:663px;top:600px;width:108px;height:28px;background:#f0f0f0;border-top:1px solid #fff;border-left:1px solid #fff;border-bottom:1px solid #696969;border-right:1px solid #696969;box-shadow:inset -1px -1px 0 #a0a0a0, inset 1px 1px 0 #e3e3e3;box-sizing:border-box"></div>
<div style="position:absolute;left:781px;top:600px;width:108px;height:28px;background:#f0f0f0;border-top:1px solid #fff;border-left:1px solid #fff;border-bottom:1px solid #696969;border-right:1px solid #696969;box-shadow:inset -1px -1px 0 #a0a0a0, inset 1px 1px 0 #e3e3e3;box-sizing:border-box"></div></div>
<span class="t" style="left:140.5px;top:38.77px;font-size:11.8px;color:#8f8f8f;font-weight:normal;font-family:'Liberation Sans';transform:scaleX(0.9780);transform-origin:0 0;">Study Settings: Zig Zag. ID:6</span>
<span class="t" style="left:153.4px;top:77.90px;font-size:13.3px;color:#000;font-weight:normal;font-family:'Liberation Sans';transform:scaleX(0.9750);transform-origin:0 0;">Settings and Inputs</span>
<span class="t" style="left:277px;top:80.19px;font-size:13.3px;color:#000;font-weight:normal;font-family:'Liberation Sans';transform:scaleX(0.9949);transform-origin:0 0;">Subgraphs</span>
<span class="t" style="left:355px;top:80.19px;font-size:13.3px;color:#000;font-weight:normal;font-family:'Liberation Sans';transform:scaleX(1.0000);transform-origin:0 0;">Alerts</span>
<span class="t" style="left:161.2px;top:136.50px;font-size:13.3px;color:#000;font-weight:normal;font-family:'Liberation Sans';transform:scaleX(1.0183);transform-origin:0 0;">Standard Precedence</span>
<span class="t" style="left:161.2px;top:162.39px;font-size:13.3px;color:#000;font-weight:normal;font-family:'Liberation Sans';transform:scaleX(0.9866);transform-origin:0 0;">Based On:</span>
<span class="t" style="left:165px;top:186.69px;font-size:13.3px;color:#000;font-weight:normal;font-family:'Liberation Sans';">&lt;Main Price Graph&gt;</span>
<span class="t" style="left:161.2px;top:214.00px;font-size:13.3px;color:#000;font-weight:normal;font-family:'Liberation Sans';transform:scaleX(0.9914);transform-origin:0 0;">Short Name:</span>
<span class="t" style="left:161.2px;top:266.39px;font-size:13.3px;color:#000;font-weight:normal;font-family:'Liberation Sans';transform:scaleX(0.9872);transform-origin:0 0;">Chart Region:</span>
<span class="t" style="left:165px;top:290.69px;font-size:13.3px;color:#000;font-weight:normal;font-family:'Liberation Sans';">1</span>
<span class="t" style="left:303.3671875px;top:287.59px;font-size:13.3px;color:#000;font-weight:normal;font-family:'Liberation Sans';">Scale</span>
<span class="t" style="left:161.2px;top:318.50px;font-size:13.3px;color:#000;font-weight:normal;font-family:'Liberation Sans';transform:scaleX(0.9936);transform-origin:0 0;">Value Format:</span>
<span class="t" style="left:165px;top:342.69px;font-size:13.3px;color:#000;font-weight:normal;font-family:'Liberation Sans';">Inherited</span>
<span class="t" style="left:179px;top:373.39px;font-size:13.3px;color:#000;font-weight:normal;font-family:'Liberation Sans';transform:scaleX(1.0104);transform-origin:0 0;">Display As Main Price Graph</span>
<span class="t" style="left:179px;top:397.39px;font-size:13.3px;color:#000;font-weight:normal;font-family:'Liberation Sans';transform:scaleX(1.0147);transform-origin:0 0;">Hide Study</span>
<span class="t" style="left:179px;top:419.00px;font-size:13.3px;color:#000;font-weight:normal;font-family:'Liberation Sans';transform:scaleX(0.9935);transform-origin:0 0;">Draw Study Underneath</span>
<span class="t" style="left:179px;top:435.00px;font-size:13.3px;color:#000;font-weight:normal;font-family:'Liberation Sans';transform:scaleX(0.9955);transform-origin:0 0;">Main Price Graph</span>
<span class="t" style="left:179px;top:457.89px;font-size:13.3px;color:#000;font-weight:normal;font-family:'Liberation Sans';transform:scaleX(0.9806);transform-origin:0 0;">Protect with Password</span>
<span class="t" style="left:161.2px;top:482.69px;font-size:13.3px;color:#000;font-weight:normal;font-family:'Liberation Sans';transform:scaleX(0.9998);transform-origin:0 0;">DLLName.FunctionName</span>
<span class="t" style="left:164.5px;top:505.19px;font-size:13.3px;color:#000;font-weight:normal;font-family:'Liberation Sans';transform:scaleX(0.9738);transform-origin:0 0;">SierraChartStudies_64</span>
<span class="t" style="left:179px;top:531.50px;font-size:13.3px;color:#000;font-weight:normal;font-family:'Liberation Sans';transform:scaleX(0.9794);transform-origin:0 0;">Include in Study Summary</span>
<span class="t" style="left:179px;top:555.50px;font-size:13.3px;color:#000;font-weight:normal;font-family:'Liberation Sans';transform:scaleX(1.0218);transform-origin:0 0;">Include in Spreadsheet</span>
<span class="t" style="left:389.3px;top:118.69px;font-size:13.3px;color:#000;font-weight:normal;font-family:'Liberation Sans';transform:scaleX(0.9891);transform-origin:0 0;">Input Name</span>
<span class="t" style="left:712px;top:118.69px;font-size:13.3px;color:#000;font-weight:normal;font-family:'Liberation Sans';transform:scaleX(1.0559);transform-origin:0 0;">Input Value</span>
<span class="t" style="left:387.4px;top:138.50px;font-size:13.3px;color:#000;font-weight:normal;font-family:'Liberation Sans';transform:scaleX(0.9434);transform-origin:0 0;">Input Data for High   (In:16)</span>
<span class="t" style="left:712px;top:138.50px;font-size:13.3px;color:#000;font-weight:normal;font-family:'Liberation Sans';">High</span>
<span class="t" style="left:387.4px;top:155.50px;font-size:13.3px;color:#000;font-weight:normal;font-family:'Liberation Sans';transform:scaleX(0.9376);transform-origin:0 0;">Input Data for Low   (In:17)</span>
<span class="t" style="left:712px;top:155.50px;font-size:13.3px;color:#000;font-weight:normal;font-family:'Liberation Sans';">Low</span>
<span class="t" style="left:387.4px;top:172.50px;font-size:13.3px;color:#000;font-weight:normal;font-family:'Liberation Sans';transform:scaleX(0.9537);transform-origin:0 0;">Calculation Mode (1,2,3)   (In:18)</span>
<span class="t" style="left:712px;top:172.50px;font-size:13.3px;color:#000;font-weight:normal;font-family:'Liberation Sans';">1</span>
<span class="t" style="left:387.4px;top:189.50px;font-size:13.3px;color:#000;font-weight:normal;font-family:'Liberation Sans';transform:scaleX(0.9771);transform-origin:0 0;">Reversal % for Calculation Mode 1   (In:19)</span>
<span class="t" style="left:712px;top:189.50px;font-size:13.3px;color:#000;font-weight:normal;font-family:'Liberation Sans';">0</span>
<span class="t" style="left:387.4px;top:206.50px;font-size:13.3px;color:#000;font-weight:normal;font-family:'Liberation Sans';transform:scaleX(0.975);transform-origin:0 0;">Reversal Amount for Calculation Mode 2,3   (In:20)</span>
<span class="t" style="left:712px;top:206.50px;font-size:13.3px;color:#000;font-weight:normal;font-family:'Liberation Sans';">0</span>
<span class="t" style="left:387.4px;top:223.50px;font-size:13.3px;color:#000;font-weight:normal;font-family:'Liberation Sans';transform:scaleX(0.975);transform-origin:0 0;">Number of Bars Required for Reversal (Calculation ...</span>
<span class="t" style="left:712px;top:223.50px;font-size:13.3px;color:#000;font-weight:normal;font-family:'Liberation Sans';">0</span>
<span class="t" style="left:387.4px;top:240.50px;font-size:13.3px;color:#000;font-weight:normal;font-family:'Liberation Sans';transform:scaleX(0.9949);transform-origin:0 0;">Volume To Accumulate   (In:1)</span>
<span class="t" style="left:712px;top:240.50px;font-size:13.3px;color:#000;font-weight:normal;font-family:'Liberation Sans';">Total Volume</span>
<span class="t" style="left:387.4px;top:257.50px;font-size:13.3px;color:#000;font-weight:normal;font-family:'Liberation Sans';transform:scaleX(0.975);transform-origin:0 0;">Reset ZigZag At Start Of Trading Day   (In:35)</span>
<span class="t" style="left:712px;top:257.50px;font-size:13.3px;color:#000;font-weight:normal;font-family:'Liberation Sans';">No</span>
<span class="t" style="left:387.4px;top:274.50px;font-size:13.3px;color:#000;font-weight:normal;font-family:'Liberation Sans';transform:scaleX(0.975);transform-origin:0 0;">Calculate New Values On Bar Close   (In:28)</span>
<span class="t" style="left:712px;top:274.50px;font-size:13.3px;color:#000;font-weight:normal;font-family:'Liberation Sans';">No</span>
<span class="t" style="left:387.4px;top:291.50px;font-size:13.3px;color:#000;font-weight:normal;font-family:'Liberation Sans';transform:scaleX(0.975);transform-origin:0 0;">Additional Output for Spreadsheets   (In:25)</span>
<span class="t" style="left:712px;top:291.50px;font-size:13.3px;color:#000;font-weight:normal;font-family:'Liberation Sans';">No</span>
<span class="t" style="left:387.4px;top:308.50px;font-size:13.3px;color:#000;font-weight:normal;font-family:'Liberation Sans';transform:scaleX(0.9736);transform-origin:0 0;">Display HH,HL,LL,LH Labels   (In:23)</span>
<span class="t" style="left:712px;top:308.50px;font-size:13.3px;color:#000;font-weight:normal;font-family:'Liberation Sans';">No</span>
<span class="t" style="left:387.4px;top:325.50px;font-size:13.3px;color:#000;font-weight:normal;font-family:'Liberation Sans';transform:scaleX(0.9909);transform-origin:0 0;">Display Reversal Price   (In:22)</span>
<span class="t" style="left:712px;top:325.50px;font-size:13.3px;color:#000;font-weight:normal;font-family:'Liberation Sans';">No</span>
<span class="t" style="left:387.4px;top:342.50px;font-size:13.3px;color:#000;font-weight:normal;font-family:'Liberation Sans';transform:scaleX(0.9718);transform-origin:0 0;">Display Length of Zig Zag Line   (In:27)</span>
<span class="t" style="left:712px;top:342.50px;font-size:13.3px;color:#000;font-weight:normal;font-family:'Liberation Sans';">Ticks</span>
<span class="t" style="left:387.4px;top:359.50px;font-size:13.3px;color:#000;font-weight:normal;font-family:'Liberation Sans';transform:scaleX(0.9907);transform-origin:0 0;">Display ZigZag Volume   (In:30)</span>
<span class="t" style="left:712px;top:359.50px;font-size:13.3px;color:#000;font-weight:normal;font-family:'Liberation Sans';">Yes</span>
<span class="t" style="left:387.4px;top:376.50px;font-size:13.3px;color:#000;font-weight:normal;font-family:'Liberation Sans';transform:scaleX(0.975);transform-origin:0 0;">Format Volume Using Large Number Suffix (K/M)   (I...</span>
<span class="t" style="left:712px;top:376.50px;font-size:13.3px;color:#000;font-weight:normal;font-family:'Liberation Sans';">No</span>
<span class="t" style="left:387.4px;top:393.50px;font-size:13.3px;color:#000;font-weight:normal;font-family:'Liberation Sans';transform:scaleX(0.9947);transform-origin:0 0;">Display Time Labels   (In:26)</span>
<span class="t" style="left:712px;top:393.50px;font-size:13.3px;color:#000;font-weight:normal;font-family:'Liberation Sans';">No</span>
<span class="t" style="left:387.4px;top:410.50px;font-size:13.3px;color:#000;font-weight:normal;font-family:'Liberation Sans';transform:scaleX(0.9914);transform-origin:0 0;">Include Seconds in Time Display   (In:38)</span>
<span class="t" style="left:712px;top:410.50px;font-size:13.3px;color:#000;font-weight:normal;font-family:'Liberation Sans';">No</span>
<span class="t" style="left:387.4px;top:427.50px;font-size:13.3px;color:#000;font-weight:normal;font-family:'Liberation Sans';transform:scaleX(0.9891);transform-origin:0 0;">Display ZigZag Time Duration   (In:31)</span>
<span class="t" style="left:712px;top:427.50px;font-size:13.3px;color:#000;font-weight:normal;font-family:'Liberation Sans';">No</span>
<span class="t" style="left:387.4px;top:444.50px;font-size:13.3px;color:#000;font-weight:normal;font-family:'Liberation Sans';transform:scaleX(0.9825);transform-origin:0 0;">Display ZigZag Number Of Bars   (In:34)</span>
<span class="t" style="left:712px;top:444.50px;font-size:13.3px;color:#000;font-weight:normal;font-family:'Liberation Sans';">No</span>
<span class="t" style="left:387.4px;top:461.50px;font-size:13.3px;color:#000;font-weight:normal;font-family:'Liberation Sans';transform:scaleX(0.975);transform-origin:0 0;">Display ZigZag Volume / Length in Ticks   (In:36)</span>
<span class="t" style="left:712px;top:461.50px;font-size:13.3px;color:#000;font-weight:normal;font-family:'Liberation Sans';">No</span>
<span class="t" style="left:387.4px;top:478.50px;font-size:13.3px;color:#000;font-weight:normal;font-family:'Liberation Sans';transform:scaleX(0.9697);transform-origin:0 0;">Use Multi-Line Labels   (In:32)</span>
<span class="t" style="left:712px;top:478.50px;font-size:13.3px;color:#000;font-weight:normal;font-family:'Liberation Sans';">Yes</span>
<span class="t" style="left:390px;top:520.40px;font-size:13.3px;color:#000;font-weight:normal;font-family:'Liberation Sans';transform:scaleX(0.9974);transform-origin:0 0;">Input</span>
<span class="t" style="left:391px;top:540.10px;font-size:13.3px;color:#000;font-weight:normal;font-family:'Liberation Sans';transform:scaleX(0.9888);transform-origin:0 0;">Select an input in the list above</span>
<span class="t" style="left:181.390625px;top:606.60px;font-size:13.3px;color:#000;font-weight:normal;font-family:'Liberation Sans';">OK</span>
<span class="t" style="left:272.3046875px;top:606.60px;font-size:13.3px;color:#000;font-weight:normal;font-family:'Liberation Sans';">Cancel</span>
<span class="t" style="left:378.3671875px;top:606.60px;font-size:13.3px;color:#000;font-weight:normal;font-family:'Liberation Sans';">Apply</span>
<span class="t" style="left:482.8203125px;top:606.60px;font-size:13.3px;color:#000;font-weight:normal;font-family:'Liberation Sans';">Help</span>
<span class="t" style="left:569.7421875px;top:606.60px;font-size:13.3px;color:#000;font-weight:normal;font-family:'Liberation Sans';">Description</span>
<span class="t" style="left:680.78125px;top:606.60px;font-size:13.3px;color:#000;font-weight:normal;font-family:'Liberation Sans';">Set Defaults</span>
<span class="t" style="left:791.390625px;top:606.60px;font-size:13.3px;color:#000;font-weight:normal;font-family:'Liberation Sans';">Reset Defaults</span>
</body></html>
